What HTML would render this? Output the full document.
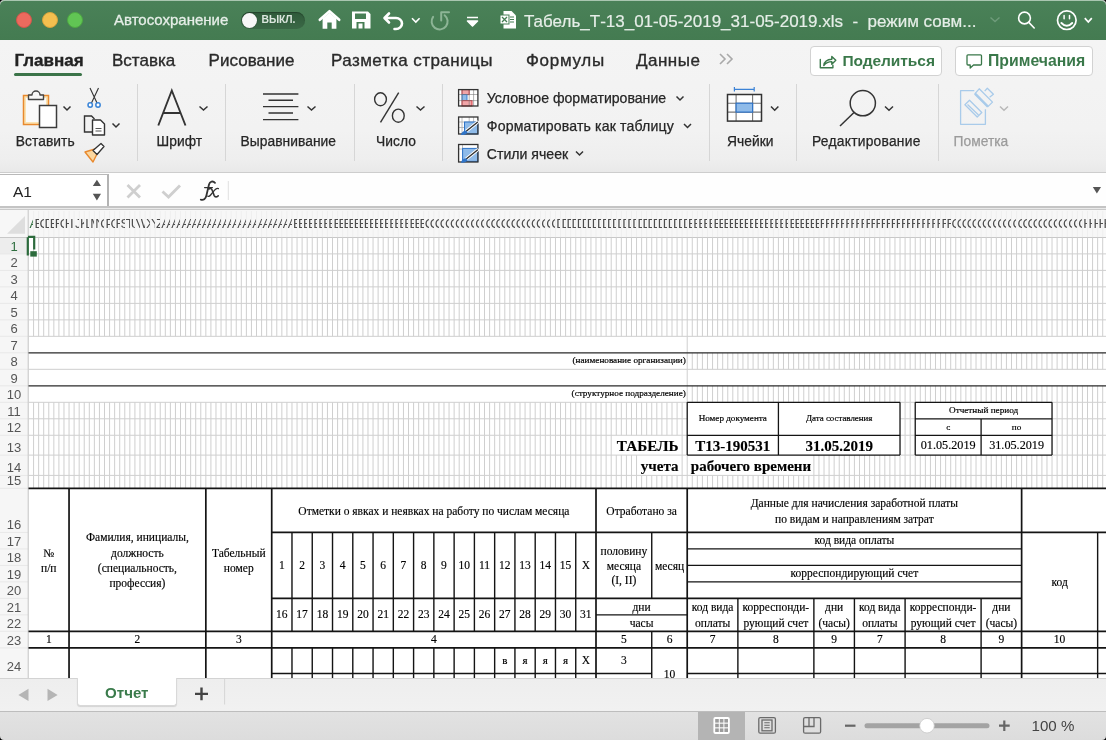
<!DOCTYPE html><html><head><meta charset="utf-8"><style>
*{margin:0;padding:0;box-sizing:border-box}
html,body{width:1106px;height:740px;overflow:hidden;background:#f3f3f3;font-family:"Liberation Sans",sans-serif}
body{will-change:transform}
.a{position:absolute}
.t{position:absolute;white-space:nowrap;color:#000;text-align:center;-webkit-text-stroke:0.15px #000}
.lbl{-webkit-text-stroke:0.25px currentColor}
.tab{-webkit-text-stroke:0.35px currentColor}
.ch{position:absolute;top:211.8px;width:4.1px;overflow:hidden;font-size:13.2px;line-height:24px;white-space:nowrap;font-family:"Liberation Sans",sans-serif}
.rh{position:absolute;left:0;width:28px;text-align:center;font-size:13px;line-height:16px;margin-top:1px}
.tab{position:absolute;top:49px;font-size:17px;color:#2a2a2a;line-height:24px;white-space:nowrap}
.lbl{position:absolute;font-size:13.8px;color:#262626;line-height:16px;white-space:nowrap}
.sep{position:absolute;top:84px;width:1px;height:77px;background:#d6d6d6}
.chev{position:absolute}
</style></head><body>

<div class="a" style="left:0;top:0;width:1106px;height:40px;background:linear-gradient(#4a8158,#447b51);border-radius:5px 5px 0 0;border-top:1px solid #a9c6b0"></div>
<div class="a" style="left:16px;top:12px;width:16px;height:16px;border-radius:50%;background:#ec6a5e;border:1px solid #d2574b"></div>
<div class="a" style="left:41.5px;top:12px;width:16px;height:16px;border-radius:50%;background:#f4bf4f;border:1px solid #d7a33d"></div>
<div class="a" style="left:66.5px;top:12px;width:16px;height:16px;border-radius:50%;background:#61c554;border:1px solid #4ea943"></div>
<div class="a" style="left:114px;top:11.2px;font-size:15px;line-height:18px;color:#e6eee8;-webkit-text-stroke:0.3px #e6eee8;white-space:nowrap">Автосохранение</div>
<div class="a" style="left:241.2px;top:11.5px;width:63.7px;height:17.4px;border-radius:9px;background:linear-gradient(#2f5a3a,#3a6846);box-shadow:inset 0 1px 1px rgba(0,0,0,0.25)"></div>
<div class="a" style="left:241.9px;top:12.5px;width:15.6px;height:15.6px;border-radius:50%;background:#f7f7f7;box-shadow:0 0 1px rgba(0,0,0,0.5)"></div>
<div class="a" style="left:261.6px;top:13.6px;font-size:10.4px;font-weight:bold;line-height:12px;color:#dbe6de;letter-spacing:-0.1px">ВЫКЛ.</div>
<svg class="a" style="left:0;top:0" width="1106" height="40" viewBox="0 0 1106 40">
<g fill="#fff" stroke="none">
<path d="M322.6 18.6 L329.5 12.8 L336.4 18.6 V28.8 H331.7 V22.4 H327.3 V28.8 H322.6 Z"/></g><path d="M319.8 19.8 L329.5 11.2 L339.2 19.8" fill="none" stroke="#fff" stroke-width="2.6" stroke-linecap="round" stroke-linejoin="round"/><g fill="#fff">
<path d="M352 11.5 h16 l2.5 2.5 v14.5 h-18.5 Z M355 13.5 v5.5 h11 v-5.5 Z M356.5 22 v6.5 h8 v-6.5 Z M358.5 23.5 h4 v5 h-4Z" fill-rule="evenodd"/>
</g>
<g fill="none" stroke="#fff" stroke-width="2.6" stroke-linecap="round" stroke-linejoin="round">
<path d="M389 13.5 L384.5 18 L389 22.5 M385 18 H396 a6 5.5 0 0 1 0 11 h-1.5"/>
</g>
<path d="M412 18.2 L415.8 22 L419.6 18.2" fill="none" stroke="#fff" stroke-width="1.6"/>
<g fill="none" stroke="#8db596" stroke-width="2" stroke-linecap="round" stroke-linejoin="round"><path d="M433.1 16.8 A 8 8 0 1 0 444.6 15.2"/><path d="M441.2 20.4 V12.3 H449"/></g>
<path d="M467 17.5 h11 M467.5 21 h10 l-5 5 z" fill="#fff" stroke="#fff" stroke-width="1.6" stroke-linejoin="round"/>
<g>
<path d="M503.5 11 h8 l4.5 4.5 v13 h-12.5z" fill="#fff"/>
<rect x="500" y="15" width="9" height="9" fill="#fff" stroke="#467e54" stroke-width="1"/>
<path d="M502 17 l5 5 M507 17 l-5 5" stroke="#467e54" stroke-width="1.3"/>
<path d="M510 17h4 M510 19.5h4 M510 22h4" stroke="#467e54" stroke-width="1"/>
</g>
<path d="M990.5 17.5 L995 21.5 L999.5 17.5" fill="none" stroke="#6f9c7b" stroke-width="1.4"/>
<g fill="none" stroke="#fff" stroke-width="1.6" stroke-linecap="round">
<circle cx="1024.5" cy="18" r="5.9"/><path d="M1028.8 22.4 L1034.2 28"/>
<circle cx="1066.8" cy="20.2" r="9.3" stroke-width="1.7"/>
<path d="M1061.4 23 Q1066.8 28.6 1072.2 23" stroke-width="1.9"/>
<path d="M1064.1 15.6 V18.8 M1069.5 15.6 V18.8" stroke-width="1.5"/>
<path d="M1084.8 18.2 L1088.3 22 L1091.8 18.2" stroke-width="1.7" stroke-linecap="butt"/>
</g>
</svg>
<div class="a" style="left:524px;top:12px;font-size:17px;line-height:20px;color:#e6eee8;white-space:nowrap;letter-spacing:0px;-webkit-text-stroke:0.2px #e6eee8">Табель_Т-13_01-05-2019_31-05-2019.xls &nbsp;- &nbsp;режим совм...</div>
<div class="a" style="left:0;top:40px;width:1106px;height:132px;background:linear-gradient(#f4f4f4 0px,#f2f2f2 90px,#eeeeee 120px,#e9e9e9 132px)"></div>
<div class="tab" style="left:14.5px;font-weight:bold;color:#222;letter-spacing:0px">Главная</div>
<div class="tab" style="left:112px;letter-spacing:0px">Вставка</div>
<div class="tab" style="left:208.5px;letter-spacing:0.05px">Рисование</div>
<div class="tab" style="left:331px;letter-spacing:0.45px">Разметка страницы</div>
<div class="tab" style="left:526px;letter-spacing:0.7px">Формулы</div>
<div class="tab" style="left:636px;letter-spacing:0.5px">Данные</div>
<div class="a" style="left:14px;top:72.5px;width:68px;height:3.5px;border-radius:2px;background:#3b7449"></div>
<svg class="a" style="left:718px;top:51px" width="20" height="16"><path d="M2 3 L7 8 L2 13 M9 3 L14 8 L9 13" fill="none" stroke="#a9a9a9" stroke-width="1.6"/></svg>
<div class="a" style="left:810px;top:46px;width:132px;height:29.5px;border:1px solid #d2d2d2;border-radius:4px;background:#fff"></div>
<div class="a" style="left:955px;top:46px;width:138px;height:29.5px;border:1px solid #d2d2d2;border-radius:4px;background:#fff"></div>
<div class="a" style="left:842.4px;top:50.8px;font-size:15.5px;line-height:20px;font-weight:bold;color:#3a784a;letter-spacing:-0.05px">Поделиться</div>
<div class="a" style="left:988px;top:50.8px;font-size:15.8px;line-height:20px;font-weight:bold;color:#3a784a">Примечания</div>
<svg class="a" style="left:0;top:0" width="1106" height="175">
<g fill="none" stroke="#3a784a" stroke-width="1.4" stroke-linejoin="round" stroke-linecap="round">
<path d="M820.3 59.5 v8.3 h12.6 v-2.5"/><path d="M823.8 65.5 q0.8 -6 8 -6.3 v-2.8 l4 3.9 -4 3.9 v-2.6 q-5 0 -8 3.9"/>
<path d="M968 54.8 h12.5 a1 1 0 0 1 1 1 v8.2 a1 1 0 0 1 -1 1 h-7 l-3.3 3 v-3 h-2.2 a1 1 0 0 1 -1 -1 v-8.2 a1 1 0 0 1 1 -1 z" stroke="#3a784a" stroke-width="1.3"/>
</g>
</svg>
<div class="sep" style="left:136.8px"></div>
<div class="sep" style="left:224.5px"></div>
<div class="sep" style="left:353.7px"></div>
<div class="sep" style="left:441.5px"></div>
<div class="sep" style="left:708.7px"></div>
<div class="sep" style="left:796.3px"></div>
<div class="sep" style="left:937.5px"></div>
<div class="lbl" style="left:15.8px;top:134px;letter-spacing:0.05px">Вставить</div>
<div class="lbl" style="left:156.6px;top:134px;letter-spacing:0.05px">Шрифт</div>
<div class="lbl" style="left:240.5px;top:134px;letter-spacing:0.05px">Выравнивание</div>
<div class="lbl" style="left:376px;top:134px;letter-spacing:0.05px">Число</div>
<div class="lbl" style="left:727px;top:134px;letter-spacing:0.05px">Ячейки</div>
<div class="lbl" style="left:812px;top:134px;letter-spacing:0.25px">Редактирование</div>
<div class="lbl" style="left:953.6px;top:134px;color:#9b9b9b">Пометка</div>
<div class="lbl" style="left:486.8px;top:90px;font-size:14.1px;letter-spacing:0px">Условное форматирование</div>
<div class="lbl" style="left:486.8px;top:118px;font-size:14.1px;letter-spacing:0.15px">Форматировать как таблицу</div>
<div class="lbl" style="left:486.8px;top:145.5px;font-size:14.1px;letter-spacing:0px">Стили ячеек</div>
<svg class="a" style="left:0;top:0" width="1106" height="175">
<!-- paste -->
<rect x="23.5" y="95.5" width="25" height="29" fill="#fbe3b2" stroke="#e8892e" stroke-width="1.5"/>
<rect x="26" y="98" width="20" height="24" fill="#fafafa"/>
<path d="M28.5 99.5 v-4.5 h3.5 a4 4 0 0 1 8 0 h3.5 v4.5 z" fill="#f7f7f7" stroke="#444" stroke-width="1.4" stroke-linejoin="round"/>
<rect x="39.5" y="105.5" width="17" height="22" fill="#fff" stroke="#3c3c3c" stroke-width="1.5"/>
<!-- scissors -->
<path d="M90 88 L97.5 104 M98.5 88 L91 104" stroke="#333" stroke-width="1.1"/>
<circle cx="90.2" cy="105" r="2.2" fill="#fff" stroke="#3a85d8" stroke-width="1.5"/>
<circle cx="98" cy="105" r="2.2" fill="#fff" stroke="#3a85d8" stroke-width="1.5"/>
<!-- copy -->
<path d="M93.5 132 h-9 v-16 h7 l3 3" fill="none" stroke="#333" stroke-width="1.4"/>
<path d="M92.5 120 h8 l4 4 v11 h-12 z" fill="#fff" stroke="#333" stroke-width="1.4" stroke-linejoin="round"/>
<path d="M95.5 128.5 h6 M95.5 131 h6" stroke="#555" stroke-width="1"/>
<!-- format painter -->
<path d="M85 152 l10 -3 l3 3 l-5 10 z" fill="#fbd7a0" stroke="#e8892e" stroke-width="1.4" stroke-linejoin="round"/>
<path d="M93 150.5 l8 -7 l3 3 l-7 8 z" fill="#fff" stroke="#333" stroke-width="1.3" stroke-linejoin="round"/>
<!-- chevrons -->
<g fill="none" stroke="#333" stroke-width="1.5">
<path d="M63.5 106.5 L67 110 L70.5 106.5"/>
<path d="M112.5 123.5 L116 127 L119.5 123.5"/>
<path d="M199.5 106.5 L203.5 110 L207.5 106.5"/>
<path d="M307.5 106.5 L311.5 110 L315.5 106.5"/>
<path d="M416.5 106.5 L420.5 110 L424.5 106.5"/>
<path d="M676.5 96.5 L680 100 L683.5 96.5"/>
<path d="M684 124 L687.5 127.5 L691 124"/>
<path d="M576 151.5 L579.5 155 L583 151.5"/>
<path d="M771 106.5 L774.7 110.2 L778.4 106.5"/>
<path d="M885 106.5 L889 110.2 L893 106.5"/>
</g>
<path d="M1000 106.5 L1004 110.2 L1008 106.5" fill="none" stroke="#b8b8b8" stroke-width="1.5"/>
<!-- A -->
<path d="M158.3 125.5 L171.8 90.5 L185.5 125.5 M163.2 113 H180.6" fill="none" stroke="#333" stroke-width="1.9"/>
<!-- align -->
<g stroke="#333" stroke-width="1.4">
<path d="M263 94 H298.4 M268.5 100.3 H293 M263 106.6 H298.4 M268.5 113 H293 M263 119.6 H298.4"/>
</g>
<!-- percent -->
<ellipse cx="380.5" cy="99.3" rx="5.9" ry="6.5" fill="none" stroke="#333" stroke-width="1.4"/>
<ellipse cx="398.3" cy="115.7" rx="5.9" ry="6.6" fill="none" stroke="#333" stroke-width="1.4"/>
<path d="M398.7 92.6 L380.5 122.4" stroke="#333" stroke-width="1.4"/>
<!-- cond format icons -->
<rect x="458.6" y="89.6" width="19.3" height="16.4" fill="#fff"/>
<rect x="462" y="89.6" width="7.2" height="5" fill="#f0a5a8" stroke="#d9363e" stroke-width="1"/>
<rect x="462" y="94.6" width="5" height="6" fill="#8fbbe9" stroke="#2f74c8" stroke-width="0.9"/>
<rect x="462" y="100.6" width="10" height="5.4" fill="#f0a5a8" stroke="#d9363e" stroke-width="1"/>
<path d="M458.6 94.5 H478 M458.6 100.6 H478 M462 89.6 V106 M469.2 89.6 V106 M473.6 89.6 V106" stroke="#777" stroke-width="0.8" fill="none" opacity="0.7"/>
<rect x="458.6" y="89.6" width="19.3" height="16.4" fill="none" stroke="#333" stroke-width="1.3"/>
<g>
<rect x="458.6" y="117" width="19.3" height="17" fill="#fff"/>
<path d="M458.6 122 H478 M458.6 127.5 H478 M462 117 V134 M469.2 117 V134 M473.6 117 V134" stroke="#888" stroke-width="0.8" opacity="0.7"/>
<rect x="464.5" y="122" width="13.4" height="12" fill="#8fbbe9" stroke="#2f74c8" stroke-width="1"/>
<rect x="458.6" y="117" width="19.3" height="17" fill="none" stroke="#333" stroke-width="1.3"/>
<path d="M477.5 122.2 L466.5 131" stroke="#fff" stroke-width="3.2" stroke-linecap="round"/>
<path d="M477.5 122.2 L466.5 131" stroke="#333" stroke-width="1.4" stroke-linecap="round"/>
<path d="M461 135 q0.5 -4 5 -4.5 l1.5 1.5 q-1 3.5 -6.5 3z" fill="#2f74c8"/>
</g>
<g>
<rect x="458.6" y="144.5" width="19.3" height="17.5" fill="#fff"/>
<path d="M458.6 149 H478 M462.5 144.5 V162" stroke="#888" stroke-width="0.8" opacity="0.7"/>
<rect x="462.6" y="148.4" width="15.3" height="13" fill="#8fbbe9" stroke="#2f74c8" stroke-width="1"/>
<rect x="458.6" y="144.5" width="19.3" height="17.5" fill="none" stroke="#333" stroke-width="1.3"/>
<path d="M477.5 150 L466.5 158.8" stroke="#fff" stroke-width="3.2" stroke-linecap="round"/>
<path d="M477.5 150 L466.5 158.8" stroke="#333" stroke-width="1.4" stroke-linecap="round"/>
<path d="M461 162.8 q0.5 -4 5 -4.5 l1.5 1.5 q-1 3.5 -6.5 3z" fill="#2f74c8"/>
</g>
<!-- cells -->
<path d="M734.4 89.3 H754.2 M734.4 87 V91.6 M754.2 87 V91.6" stroke="#3b82d6" stroke-width="1.2"/>
<rect x="727.5" y="94.5" width="34" height="26.6" fill="#fff"/>
<path d="M727.5 103.2 H761.5 M727.5 112.1 H761.5 M736.1 94.5 V121.1 M752.6 94.5 V121.1" stroke="#777" stroke-width="1.1"/>
<rect x="736.1" y="103.2" width="16.5" height="8.9" fill="#8fbbe9" stroke="#2f74c8" stroke-width="1.2"/>
<rect x="727.5" y="94.5" width="34" height="26.6" fill="none" stroke="#333" stroke-width="1.5"/>
<!-- search -->
<circle cx="862.8" cy="103.2" r="12.6" fill="none" stroke="#333" stroke-width="1.5"/>
<path d="M854 112.5 L840 126" stroke="#333" stroke-width="1.5"/>
<!-- pometka -->
<g fill="none" stroke="#a9cbea" stroke-width="1.3" stroke-linejoin="round">
<path d="M974.3 90.6 H960.6 V124.3 H985.4 V109.2"/>
<path d="M964.9 104.7 L969.5 100.2 L981.8 112.5 L977.2 117 Z"/>
<path d="M967.5 104.5 L978.5 115"/>
<path d="M975 93.7 L979.2 88.8 L992.5 102.1 L987.9 106.6 Z"/>
<path d="M984.7 91.1 L987.3 88.2 L993.4 94.3 L989.6 97.2"/>
</g>
<path d="M975 93.7 L987.9 106.6" stroke="#a9cbea" stroke-width="2.5"/>
</svg>
<div class="a" style="left:0;top:171.8px;width:1106px;height:1.4px;background:#cdcdcd"></div>
<div class="a" style="left:0;top:173.2px;width:1106px;height:33px;background:#fefefe"></div>
<div class="a" style="left:0;top:173.5px;width:108.5px;height:33px;background:#fff;border-top:1.5px solid #b9b9b9;border-right:2.2px solid #b3b3b3"></div>
<div class="a" style="left:13px;top:182px;font-size:15.5px;line-height:20px;color:#222">A1</div>
<svg class="a" style="left:0;top:170px" width="1106" height="45">
<path d="M92.8 16 L96.9 9.7 L101 16z M92.8 23.8 L96.9 30.5 L101 23.8z" fill="#555"/>
<path d="M127.5 15 L140 27.5 M140 15 L127.5 27.5" stroke="#cfcfcf" stroke-width="2.8"/>
<path d="M162.5 21.5 L168.5 27 L180 15.5" fill="none" stroke="#cfcfcf" stroke-width="2.9"/>
<path d="M1092.8 17 H1101 L1096.9 23.5z" fill="#555"/>
<path d="M228.3 11 V30" stroke="#e0e0e0" stroke-width="1"/>
</svg>
<svg class="a" style="left:0;top:170px" width="240" height="40"><g fill="none" stroke="#333" stroke-linecap="round"><path d="M215 12.8 C213 10.6 209.8 11.2 209 14.5 L206.4 25.5 C205.6 29 203.4 30.4 200.8 29.6" stroke-width="1.8"/><path d="M204.6 17.6 H212.4" stroke-width="1.3"/><path d="M208.8 19 C210.6 17.6 211.8 18.6 212.5 21 L214.2 25.6 C215 27.4 216.6 27.2 218.2 25.8" stroke-width="1.6"/><path d="M218.4 18.6 C217 17.9 215.8 18.8 214.6 20.2 L210.6 25 C209.6 26.4 208.6 26.7 207.8 26.2" stroke-width="1.3"/></g></svg>
<div class="a" style="left:0;top:206.3px;width:1106px;height:1.3px;background:#c4c4c4"></div>
<div class="a" style="left:0;top:207.6px;width:1106px;height:1.8px;background:#e9e9e9"></div>
<div class="a" style="left:0;top:209.2px;width:1106px;height:1.2px;background:#c9c9c9"></div>
<div class="a" style="left:0;top:210.4px;width:1106px;height:27px;background:#f7f7f7"></div>
<svg class="a" style="left:0;top:0" width="1106" height="240"><path d="M33.57 211V237M38.63 211V237M43.7 211V237M48.77 211V237M53.84 211V237M58.9 211V237M63.97 211V237M69.04 211V237M74.1 211V237M79.17 211V237M84.24 211V237M89.3 211V237M94.37 211V237M99.44 211V237M104.5 211V237M109.57 211V237M114.64 211V237M119.71 211V237M124.77 211V237M129.84 211V237M134.91 211V237M139.97 211V237M145.04 211V237M150.11 211V237M155.18 211V237M160.24 211V237M165.31 211V237M170.38 211V237M175.44 211V237M180.51 211V237M185.58 211V237M190.64 211V237M195.71 211V237M200.78 211V237M205.84 211V237M210.91 211V237M215.98 211V237M221.05 211V237M226.11 211V237M231.18 211V237M236.25 211V237M241.31 211V237M246.38 211V237M251.45 211V237M256.51 211V237M261.58 211V237M266.65 211V237M271.72 211V237M276.78 211V237M281.85 211V237M286.92 211V237M291.98 211V237M297.05 211V237M302.12 211V237M307.19 211V237M312.25 211V237M317.32 211V237M322.39 211V237M327.45 211V237M332.52 211V237M337.59 211V237M342.65 211V237M347.72 211V237M352.79 211V237M357.86 211V237M362.92 211V237M367.99 211V237M373.06 211V237M378.12 211V237M383.19 211V237M388.26 211V237M393.32 211V237M398.39 211V237M403.46 211V237M408.53 211V237M413.59 211V237M418.66 211V237M423.73 211V237M428.79 211V237M433.86 211V237M438.93 211V237M443.99 211V237M449.06 211V237M454.13 211V237M459.19 211V237M464.26 211V237M469.33 211V237M474.4 211V237M479.46 211V237M484.53 211V237M489.6 211V237M494.66 211V237M499.73 211V237M504.8 211V237M509.87 211V237M514.93 211V237M520 211V237M525.07 211V237M530.13 211V237M535.2 211V237M540.27 211V237M545.33 211V237M550.4 211V237M555.47 211V237M560.53 211V237M565.6 211V237M570.67 211V237M575.74 211V237M580.8 211V237M585.87 211V237M590.94 211V237M596 211V237M601.07 211V237M606.14 211V237M611.21 211V237M616.27 211V237M621.34 211V237M626.41 211V237M631.47 211V237M636.54 211V237M641.61 211V237M646.67 211V237M651.74 211V237M656.81 211V237M661.88 211V237M666.94 211V237M672.01 211V237M677.08 211V237M682.14 211V237M687.21 211V237M692.28 211V237M697.34 211V237M702.41 211V237M707.48 211V237M712.55 211V237M717.61 211V237M722.68 211V237M727.75 211V237M732.81 211V237M737.88 211V237M742.95 211V237M748.01 211V237M753.08 211V237M758.15 211V237M763.22 211V237M768.28 211V237M773.35 211V237M778.42 211V237M783.48 211V237M788.55 211V237M793.62 211V237M798.68 211V237M803.75 211V237M808.82 211V237M813.88 211V237M818.95 211V237M824.02 211V237M829.09 211V237M834.15 211V237M839.22 211V237M844.29 211V237M849.35 211V237M854.42 211V237M859.49 211V237M864.56 211V237M869.62 211V237M874.69 211V237M879.76 211V237M884.82 211V237M889.89 211V237M894.96 211V237M900.02 211V237M905.09 211V237M910.16 211V237M915.23 211V237M920.29 211V237M925.36 211V237M930.43 211V237M935.49 211V237M940.56 211V237M945.63 211V237M950.69 211V237M955.76 211V237M960.83 211V237M965.89 211V237M970.96 211V237M976.03 211V237M981.1 211V237M986.16 211V237M991.23 211V237M996.3 211V237M1001.36 211V237M1006.43 211V237M1011.5 211V237M1016.57 211V237M1021.63 211V237M1026.7 211V237M1031.77 211V237M1036.83 211V237M1041.9 211V237M1046.97 211V237M1052.03 211V237M1057.1 211V237M1062.17 211V237M1067.24 211V237M1072.3 211V237M1077.37 211V237M1082.44 211V237M1087.5 211V237M1092.57 211V237M1097.64 211V237M1102.7 211V237M1107.77 211V237" stroke="#efefef" stroke-width="1"/>
<path d="M7 233.8 L25 233.8 L25 216Z" fill="#dedede"/></svg>
<div class="ch" style="left:29.4px;color:#2f6e3f">A</div><div class="ch" style="left:34.47px;color:#4d4d4d">B</div><div class="ch" style="left:39.53px;color:#4d4d4d">C</div><div class="ch" style="left:44.6px;color:#4d4d4d">D</div><div class="ch" style="left:49.67px;color:#4d4d4d">E</div><div class="ch" style="left:54.73px;color:#4d4d4d">F</div><div class="ch" style="left:59.8px;color:#4d4d4d">G</div><div class="ch" style="left:64.87px;color:#4d4d4d">H</div><div class="ch" style="left:69.94px;color:#4d4d4d">I</div><div class="ch" style="left:75px;color:#4d4d4d">J</div><div class="ch" style="left:80.07px;color:#4d4d4d">K</div><div class="ch" style="left:85.14px;color:#4d4d4d">L</div><div class="ch" style="left:90.2px;color:#4d4d4d">M</div><div class="ch" style="left:95.27px;color:#4d4d4d">N</div><div class="ch" style="left:100.34px;color:#4d4d4d">O</div><div class="ch" style="left:105.41px;color:#4d4d4d">P</div><div class="ch" style="left:110.47px;color:#4d4d4d">Q</div><div class="ch" style="left:115.54px;color:#4d4d4d">R</div><div class="ch" style="left:120.61px;color:#4d4d4d">S</div><div class="ch" style="left:125.67px;color:#4d4d4d">T</div><div class="ch" style="left:130.74px;color:#4d4d4d">U</div><div class="ch" style="left:135.81px;color:#4d4d4d">V</div><div class="ch" style="left:140.87px;color:#4d4d4d">W</div><div class="ch" style="left:145.94px;color:#4d4d4d">X</div><div class="ch" style="left:151.01px;color:#4d4d4d">Y</div><div class="ch" style="left:156.08px;color:#4d4d4d">Z</div><div class="ch" style="left:161.14px;color:#4d4d4d">AA</div><div class="ch" style="left:166.21px;color:#4d4d4d">AB</div><div class="ch" style="left:171.28px;color:#4d4d4d">AC</div><div class="ch" style="left:176.34px;color:#4d4d4d">AD</div><div class="ch" style="left:181.41px;color:#4d4d4d">AE</div><div class="ch" style="left:186.48px;color:#4d4d4d">AF</div><div class="ch" style="left:191.54px;color:#4d4d4d">AG</div><div class="ch" style="left:196.61px;color:#4d4d4d">AH</div><div class="ch" style="left:201.68px;color:#4d4d4d">AI</div><div class="ch" style="left:206.75px;color:#4d4d4d">AJ</div><div class="ch" style="left:211.81px;color:#4d4d4d">AK</div><div class="ch" style="left:216.88px;color:#4d4d4d">AL</div><div class="ch" style="left:221.95px;color:#4d4d4d">AM</div><div class="ch" style="left:227.01px;color:#4d4d4d">AN</div><div class="ch" style="left:232.08px;color:#4d4d4d">AO</div><div class="ch" style="left:237.15px;color:#4d4d4d">AP</div><div class="ch" style="left:242.21px;color:#4d4d4d">AQ</div><div class="ch" style="left:247.28px;color:#4d4d4d">AR</div><div class="ch" style="left:252.35px;color:#4d4d4d">AS</div><div class="ch" style="left:257.41px;color:#4d4d4d">AT</div><div class="ch" style="left:262.48px;color:#4d4d4d">AU</div><div class="ch" style="left:267.55px;color:#4d4d4d">AV</div><div class="ch" style="left:272.62px;color:#4d4d4d">AW</div><div class="ch" style="left:277.68px;color:#4d4d4d">AX</div><div class="ch" style="left:282.75px;color:#4d4d4d">AY</div><div class="ch" style="left:287.82px;color:#4d4d4d">AZ</div><div class="ch" style="left:292.88px;color:#4d4d4d">BA</div><div class="ch" style="left:297.95px;color:#4d4d4d">BB</div><div class="ch" style="left:303.02px;color:#4d4d4d">BC</div><div class="ch" style="left:308.08px;color:#4d4d4d">BD</div><div class="ch" style="left:313.15px;color:#4d4d4d">BE</div><div class="ch" style="left:318.22px;color:#4d4d4d">BF</div><div class="ch" style="left:323.29px;color:#4d4d4d">BG</div><div class="ch" style="left:328.35px;color:#4d4d4d">BH</div><div class="ch" style="left:333.42px;color:#4d4d4d">BI</div><div class="ch" style="left:338.49px;color:#4d4d4d">BJ</div><div class="ch" style="left:343.55px;color:#4d4d4d">BK</div><div class="ch" style="left:348.62px;color:#4d4d4d">BL</div><div class="ch" style="left:353.69px;color:#4d4d4d">BM</div><div class="ch" style="left:358.75px;color:#4d4d4d">BN</div><div class="ch" style="left:363.82px;color:#4d4d4d">BO</div><div class="ch" style="left:368.89px;color:#4d4d4d">BP</div><div class="ch" style="left:373.96px;color:#4d4d4d">BQ</div><div class="ch" style="left:379.02px;color:#4d4d4d">BR</div><div class="ch" style="left:384.09px;color:#4d4d4d">BS</div><div class="ch" style="left:389.16px;color:#4d4d4d">BT</div><div class="ch" style="left:394.22px;color:#4d4d4d">BU</div><div class="ch" style="left:399.29px;color:#4d4d4d">BV</div><div class="ch" style="left:404.36px;color:#4d4d4d">BW</div><div class="ch" style="left:409.43px;color:#4d4d4d">BX</div><div class="ch" style="left:414.49px;color:#4d4d4d">BY</div><div class="ch" style="left:419.56px;color:#4d4d4d">BZ</div><div class="ch" style="left:424.63px;color:#4d4d4d">CA</div><div class="ch" style="left:429.69px;color:#4d4d4d">CB</div><div class="ch" style="left:434.76px;color:#4d4d4d">CC</div><div class="ch" style="left:439.83px;color:#4d4d4d">CD</div><div class="ch" style="left:444.89px;color:#4d4d4d">CE</div><div class="ch" style="left:449.96px;color:#4d4d4d">CF</div><div class="ch" style="left:455.03px;color:#4d4d4d">CG</div><div class="ch" style="left:460.09px;color:#4d4d4d">CH</div><div class="ch" style="left:465.16px;color:#4d4d4d">CI</div><div class="ch" style="left:470.23px;color:#4d4d4d">CJ</div><div class="ch" style="left:475.3px;color:#4d4d4d">CK</div><div class="ch" style="left:480.36px;color:#4d4d4d">CL</div><div class="ch" style="left:485.43px;color:#4d4d4d">CM</div><div class="ch" style="left:490.5px;color:#4d4d4d">CN</div><div class="ch" style="left:495.56px;color:#4d4d4d">CO</div><div class="ch" style="left:500.63px;color:#4d4d4d">CP</div><div class="ch" style="left:505.7px;color:#4d4d4d">CQ</div><div class="ch" style="left:510.76px;color:#4d4d4d">CR</div><div class="ch" style="left:515.83px;color:#4d4d4d">CS</div><div class="ch" style="left:520.9px;color:#4d4d4d">CT</div><div class="ch" style="left:525.97px;color:#4d4d4d">CU</div><div class="ch" style="left:531.03px;color:#4d4d4d">CV</div><div class="ch" style="left:536.1px;color:#4d4d4d">CW</div><div class="ch" style="left:541.17px;color:#4d4d4d">CX</div><div class="ch" style="left:546.23px;color:#4d4d4d">CY</div><div class="ch" style="left:551.3px;color:#4d4d4d">CZ</div><div class="ch" style="left:556.37px;color:#4d4d4d">DA</div><div class="ch" style="left:561.43px;color:#4d4d4d">DB</div><div class="ch" style="left:566.5px;color:#4d4d4d">DC</div><div class="ch" style="left:571.57px;color:#4d4d4d">DD</div><div class="ch" style="left:576.64px;color:#4d4d4d">DE</div><div class="ch" style="left:581.7px;color:#4d4d4d">DF</div><div class="ch" style="left:586.77px;color:#4d4d4d">DG</div><div class="ch" style="left:591.84px;color:#4d4d4d">DH</div><div class="ch" style="left:596.9px;color:#4d4d4d">DI</div><div class="ch" style="left:601.97px;color:#4d4d4d">DJ</div><div class="ch" style="left:607.04px;color:#4d4d4d">DK</div><div class="ch" style="left:612.11px;color:#4d4d4d">DL</div><div class="ch" style="left:617.17px;color:#4d4d4d">DM</div><div class="ch" style="left:622.24px;color:#4d4d4d">DN</div><div class="ch" style="left:627.31px;color:#4d4d4d">DO</div><div class="ch" style="left:632.37px;color:#4d4d4d">DP</div><div class="ch" style="left:637.44px;color:#4d4d4d">DQ</div><div class="ch" style="left:642.51px;color:#4d4d4d">DR</div><div class="ch" style="left:647.57px;color:#4d4d4d">DS</div><div class="ch" style="left:652.64px;color:#4d4d4d">DT</div><div class="ch" style="left:657.71px;color:#4d4d4d">DU</div><div class="ch" style="left:662.77px;color:#4d4d4d">DV</div><div class="ch" style="left:667.84px;color:#4d4d4d">DW</div><div class="ch" style="left:672.91px;color:#4d4d4d">DX</div><div class="ch" style="left:677.98px;color:#4d4d4d">DY</div><div class="ch" style="left:683.04px;color:#4d4d4d">DZ</div><div class="ch" style="left:688.11px;color:#4d4d4d">EA</div><div class="ch" style="left:693.18px;color:#4d4d4d">EB</div><div class="ch" style="left:698.24px;color:#4d4d4d">EC</div><div class="ch" style="left:703.31px;color:#4d4d4d">ED</div><div class="ch" style="left:708.38px;color:#4d4d4d">EE</div><div class="ch" style="left:713.45px;color:#4d4d4d">EF</div><div class="ch" style="left:718.51px;color:#4d4d4d">EG</div><div class="ch" style="left:723.58px;color:#4d4d4d">EH</div><div class="ch" style="left:728.65px;color:#4d4d4d">EI</div><div class="ch" style="left:733.71px;color:#4d4d4d">EJ</div><div class="ch" style="left:738.78px;color:#4d4d4d">EK</div><div class="ch" style="left:743.85px;color:#4d4d4d">EL</div><div class="ch" style="left:748.91px;color:#4d4d4d">EM</div><div class="ch" style="left:753.98px;color:#4d4d4d">EN</div><div class="ch" style="left:759.05px;color:#4d4d4d">EO</div><div class="ch" style="left:764.12px;color:#4d4d4d">EP</div><div class="ch" style="left:769.18px;color:#4d4d4d">EQ</div><div class="ch" style="left:774.25px;color:#4d4d4d">ER</div><div class="ch" style="left:779.32px;color:#4d4d4d">ES</div><div class="ch" style="left:784.38px;color:#4d4d4d">ET</div><div class="ch" style="left:789.45px;color:#4d4d4d">EU</div><div class="ch" style="left:794.52px;color:#4d4d4d">EV</div><div class="ch" style="left:799.58px;color:#4d4d4d">EW</div><div class="ch" style="left:804.65px;color:#4d4d4d">EX</div><div class="ch" style="left:809.72px;color:#4d4d4d">EY</div><div class="ch" style="left:814.78px;color:#4d4d4d">EZ</div><div class="ch" style="left:819.85px;color:#4d4d4d">FA</div><div class="ch" style="left:824.92px;color:#4d4d4d">FB</div><div class="ch" style="left:829.99px;color:#4d4d4d">FC</div><div class="ch" style="left:835.05px;color:#4d4d4d">FD</div><div class="ch" style="left:840.12px;color:#4d4d4d">FE</div><div class="ch" style="left:845.19px;color:#4d4d4d">FF</div><div class="ch" style="left:850.25px;color:#4d4d4d">FG</div><div class="ch" style="left:855.32px;color:#4d4d4d">FH</div><div class="ch" style="left:860.39px;color:#4d4d4d">FI</div><div class="ch" style="left:865.46px;color:#4d4d4d">FJ</div><div class="ch" style="left:870.52px;color:#4d4d4d">FK</div><div class="ch" style="left:875.59px;color:#4d4d4d">FL</div><div class="ch" style="left:880.66px;color:#4d4d4d">FM</div><div class="ch" style="left:885.72px;color:#4d4d4d">FN</div><div class="ch" style="left:890.79px;color:#4d4d4d">FO</div><div class="ch" style="left:895.86px;color:#4d4d4d">FP</div><div class="ch" style="left:900.92px;color:#4d4d4d">FQ</div><div class="ch" style="left:905.99px;color:#4d4d4d">FR</div><div class="ch" style="left:911.06px;color:#4d4d4d">FS</div><div class="ch" style="left:916.12px;color:#4d4d4d">FT</div><div class="ch" style="left:921.19px;color:#4d4d4d">FU</div><div class="ch" style="left:926.26px;color:#4d4d4d">FV</div><div class="ch" style="left:931.33px;color:#4d4d4d">FW</div><div class="ch" style="left:936.39px;color:#4d4d4d">FX</div><div class="ch" style="left:941.46px;color:#4d4d4d">FY</div><div class="ch" style="left:946.53px;color:#4d4d4d">FZ</div><div class="ch" style="left:951.59px;color:#4d4d4d">GA</div><div class="ch" style="left:956.66px;color:#4d4d4d">GB</div><div class="ch" style="left:961.73px;color:#4d4d4d">GC</div><div class="ch" style="left:966.79px;color:#4d4d4d">GD</div><div class="ch" style="left:971.86px;color:#4d4d4d">GE</div><div class="ch" style="left:976.93px;color:#4d4d4d">GF</div><div class="ch" style="left:982px;color:#4d4d4d">GG</div><div class="ch" style="left:987.06px;color:#4d4d4d">GH</div><div class="ch" style="left:992.13px;color:#4d4d4d">GI</div><div class="ch" style="left:997.2px;color:#4d4d4d">GJ</div><div class="ch" style="left:1002.26px;color:#4d4d4d">GK</div><div class="ch" style="left:1007.33px;color:#4d4d4d">GL</div><div class="ch" style="left:1012.4px;color:#4d4d4d">GM</div><div class="ch" style="left:1017.47px;color:#4d4d4d">GN</div><div class="ch" style="left:1022.53px;color:#4d4d4d">GO</div><div class="ch" style="left:1027.6px;color:#4d4d4d">GP</div><div class="ch" style="left:1032.67px;color:#4d4d4d">GQ</div><div class="ch" style="left:1037.73px;color:#4d4d4d">GR</div><div class="ch" style="left:1042.8px;color:#4d4d4d">GS</div><div class="ch" style="left:1047.87px;color:#4d4d4d">GT</div><div class="ch" style="left:1052.93px;color:#4d4d4d">GU</div><div class="ch" style="left:1058px;color:#4d4d4d">GV</div><div class="ch" style="left:1063.07px;color:#4d4d4d">GW</div><div class="ch" style="left:1068.14px;color:#4d4d4d">GX</div><div class="ch" style="left:1073.2px;color:#4d4d4d">GY</div><div class="ch" style="left:1078.27px;color:#4d4d4d">GZ</div><div class="ch" style="left:1083.34px;color:#4d4d4d">HA</div><div class="ch" style="left:1088.4px;color:#4d4d4d">HB</div><div class="ch" style="left:1093.47px;color:#4d4d4d">HC</div><div class="ch" style="left:1098.54px;color:#4d4d4d">HD</div><div class="ch" style="left:1103.6px;color:#4d4d4d">HE</div>
<div class="a" style="left:0;top:237px;width:1106px;height:1px;background:#c8c8c8"></div>
<div class="a" style="left:28.5px;top:237.5px;width:1078px;height:441px;background:#fff"></div>
<div class="a" style="left:0;top:237.5px;width:28.5px;height:441px;background:#f6f6f6"></div>
<div class="a" style="left:0;top:237.5px;width:28.5px;height:16.5px;background:#ededed"></div>
<svg class="a" style="left:0;top:0" width="1106" height="680">
<path d="M0 253.89H28M0 270.38H28M0 286.87H28M0 303.36H28M0 319.85H28M0 336.34H28M0 352.83H28M0 369.32H28M0 385.81H28M0 402.3H28M0 418.79H28M0 435.28H28M0 455.1H28M0 475.4H28M0 488.3H28M0 532.4H28M0 548.89H28M0 565.38H28M0 581.87H28M0 598.36H28M0 614.85H28M0 631.34H28M0 647.9H28" stroke="#e8e8e8" stroke-width="1"/>
<path d="M28.2 210 V678" stroke="#c6c6c6" stroke-width="1"/>
<path d="M33.57 237.4V336.34M38.63 237.4V336.34M43.7 237.4V336.34M48.77 237.4V336.34M53.84 237.4V336.34M58.9 237.4V336.34M63.97 237.4V336.34M69.04 237.4V336.34M74.1 237.4V336.34M79.17 237.4V336.34M84.24 237.4V336.34M89.3 237.4V336.34M94.37 237.4V336.34M99.44 237.4V336.34M104.5 237.4V336.34M109.57 237.4V336.34M114.64 237.4V336.34M119.71 237.4V336.34M124.77 237.4V336.34M129.84 237.4V336.34M134.91 237.4V336.34M139.97 237.4V336.34M145.04 237.4V336.34M150.11 237.4V336.34M155.18 237.4V336.34M160.24 237.4V336.34M165.31 237.4V336.34M170.38 237.4V336.34M175.44 237.4V336.34M180.51 237.4V336.34M185.58 237.4V336.34M190.64 237.4V336.34M195.71 237.4V336.34M200.78 237.4V336.34M205.84 237.4V336.34M210.91 237.4V336.34M215.98 237.4V336.34M221.05 237.4V336.34M226.11 237.4V336.34M231.18 237.4V336.34M236.25 237.4V336.34M241.31 237.4V336.34M246.38 237.4V336.34M251.45 237.4V336.34M256.51 237.4V336.34M261.58 237.4V336.34M266.65 237.4V336.34M271.72 237.4V336.34M276.78 237.4V336.34M281.85 237.4V336.34M286.92 237.4V336.34M291.98 237.4V336.34M297.05 237.4V336.34M302.12 237.4V336.34M307.19 237.4V336.34M312.25 237.4V336.34M317.32 237.4V336.34M322.39 237.4V336.34M327.45 237.4V336.34M332.52 237.4V336.34M337.59 237.4V336.34M342.65 237.4V336.34M347.72 237.4V336.34M352.79 237.4V336.34M357.86 237.4V336.34M362.92 237.4V336.34M367.99 237.4V336.34M373.06 237.4V336.34M378.12 237.4V336.34M383.19 237.4V336.34M388.26 237.4V336.34M393.32 237.4V336.34M398.39 237.4V336.34M403.46 237.4V336.34M408.53 237.4V336.34M413.59 237.4V336.34M418.66 237.4V336.34M423.73 237.4V336.34M428.79 237.4V336.34M433.86 237.4V336.34M438.93 237.4V336.34M443.99 237.4V336.34M449.06 237.4V336.34M454.13 237.4V336.34M459.19 237.4V336.34M464.26 237.4V336.34M469.33 237.4V336.34M474.4 237.4V336.34M479.46 237.4V336.34M484.53 237.4V336.34M489.6 237.4V336.34M494.66 237.4V336.34M499.73 237.4V336.34M504.8 237.4V336.34M509.87 237.4V336.34M514.93 237.4V336.34M520 237.4V336.34M525.07 237.4V336.34M530.13 237.4V336.34M535.2 237.4V336.34M540.27 237.4V336.34M545.33 237.4V336.34M550.4 237.4V336.34M555.47 237.4V336.34M560.53 237.4V336.34M565.6 237.4V336.34M570.67 237.4V336.34M575.74 237.4V336.34M580.8 237.4V336.34M585.87 237.4V336.34M590.94 237.4V336.34M596 237.4V336.34M601.07 237.4V336.34M606.14 237.4V336.34M611.21 237.4V336.34M616.27 237.4V336.34M621.34 237.4V336.34M626.41 237.4V336.34M631.47 237.4V336.34M636.54 237.4V336.34M641.61 237.4V336.34M646.67 237.4V336.34M651.74 237.4V336.34M656.81 237.4V336.34M661.88 237.4V336.34M666.94 237.4V336.34M672.01 237.4V336.34M677.08 237.4V336.34M682.14 237.4V336.34M687.21 237.4V336.34M692.28 237.4V336.34M697.34 237.4V336.34M702.41 237.4V336.34M707.48 237.4V336.34M712.55 237.4V336.34M717.61 237.4V336.34M722.68 237.4V336.34M727.75 237.4V336.34M732.81 237.4V336.34M737.88 237.4V336.34M742.95 237.4V336.34M748.01 237.4V336.34M753.08 237.4V336.34M758.15 237.4V336.34M763.22 237.4V336.34M768.28 237.4V336.34M773.35 237.4V336.34M778.42 237.4V336.34M783.48 237.4V336.34M788.55 237.4V336.34M793.62 237.4V336.34M798.68 237.4V336.34M803.75 237.4V336.34M808.82 237.4V336.34M813.88 237.4V336.34M818.95 237.4V336.34M824.02 237.4V336.34M829.09 237.4V336.34M834.15 237.4V336.34M839.22 237.4V336.34M844.29 237.4V336.34M849.35 237.4V336.34M854.42 237.4V336.34M859.49 237.4V336.34M864.56 237.4V336.34M869.62 237.4V336.34M874.69 237.4V336.34M879.76 237.4V336.34M884.82 237.4V336.34M889.89 237.4V336.34M894.96 237.4V336.34M900.02 237.4V336.34M905.09 237.4V336.34M910.16 237.4V336.34M915.23 237.4V336.34M920.29 237.4V336.34M925.36 237.4V336.34M930.43 237.4V336.34M935.49 237.4V336.34M940.56 237.4V336.34M945.63 237.4V336.34M950.69 237.4V336.34M955.76 237.4V336.34M960.83 237.4V336.34M965.89 237.4V336.34M970.96 237.4V336.34M976.03 237.4V336.34M981.1 237.4V336.34M986.16 237.4V336.34M991.23 237.4V336.34M996.3 237.4V336.34M1001.36 237.4V336.34M1006.43 237.4V336.34M1011.5 237.4V336.34M1016.57 237.4V336.34M1021.63 237.4V336.34M1026.7 237.4V336.34M1031.77 237.4V336.34M1036.83 237.4V336.34M1041.9 237.4V336.34M1046.97 237.4V336.34M1052.03 237.4V336.34M1057.1 237.4V336.34M1062.17 237.4V336.34M1067.24 237.4V336.34M1072.3 237.4V336.34M1077.37 237.4V336.34M1082.44 237.4V336.34M1087.5 237.4V336.34M1092.57 237.4V336.34M1097.64 237.4V336.34M1102.7 237.4V336.34M1107.77 237.4V336.34M687.21 336.34V402.3M692.28 352.83V369.32M697.34 352.83V369.32M702.41 352.83V369.32M707.48 352.83V369.32M712.55 352.83V369.32M717.61 352.83V369.32M722.68 352.83V369.32M727.75 352.83V369.32M732.81 352.83V369.32M737.88 352.83V369.32M742.95 352.83V369.32M748.01 352.83V369.32M753.08 352.83V369.32M758.15 352.83V369.32M763.22 352.83V369.32M768.28 352.83V369.32M773.35 352.83V369.32M778.42 352.83V369.32M783.48 352.83V369.32M788.55 352.83V369.32M793.62 352.83V369.32M798.68 352.83V369.32M803.75 352.83V369.32M808.82 352.83V369.32M813.88 352.83V369.32M818.95 352.83V369.32M824.02 352.83V369.32M829.09 352.83V369.32M834.15 352.83V369.32M839.22 352.83V369.32M844.29 352.83V369.32M849.35 352.83V369.32M854.42 352.83V369.32M859.49 352.83V369.32M864.56 352.83V369.32M869.62 352.83V369.32M874.69 352.83V369.32M879.76 352.83V369.32M884.82 352.83V369.32M889.89 352.83V369.32M894.96 352.83V369.32M900.02 352.83V369.32M905.09 352.83V369.32M910.16 352.83V369.32M915.23 352.83V369.32M920.29 352.83V369.32M925.36 352.83V369.32M930.43 352.83V369.32M935.49 352.83V369.32M940.56 352.83V369.32M945.63 352.83V369.32M950.69 352.83V369.32M955.76 352.83V369.32M960.83 352.83V369.32M965.89 352.83V369.32M970.96 352.83V369.32M976.03 352.83V369.32M981.1 352.83V369.32M986.16 352.83V369.32M991.23 352.83V369.32M996.3 352.83V369.32M1001.36 352.83V369.32M1006.43 352.83V369.32M1011.5 352.83V369.32M1016.57 352.83V369.32M1021.63 352.83V369.32M1026.7 352.83V369.32M1031.77 352.83V369.32M1036.83 352.83V369.32M1041.9 352.83V369.32M1046.97 352.83V369.32M1052.03 352.83V369.32M1057.1 352.83V369.32M1062.17 352.83V369.32M1067.24 352.83V369.32M1072.3 352.83V369.32M1077.37 352.83V369.32M1082.44 352.83V369.32M1087.5 352.83V369.32M1092.57 352.83V369.32M1097.64 352.83V369.32M1102.7 352.83V369.32M1107.77 352.83V369.32M692.28 385.81V402.3M697.34 385.81V402.3M702.41 385.81V402.3M707.48 385.81V402.3M712.55 385.81V402.3M717.61 385.81V402.3M722.68 385.81V402.3M727.75 385.81V402.3M732.81 385.81V402.3M737.88 385.81V402.3M742.95 385.81V402.3M748.01 385.81V402.3M753.08 385.81V402.3M758.15 385.81V402.3M763.22 385.81V402.3M768.28 385.81V402.3M773.35 385.81V402.3M778.42 385.81V402.3M783.48 385.81V402.3M788.55 385.81V402.3M793.62 385.81V402.3M798.68 385.81V402.3M803.75 385.81V402.3M808.82 385.81V402.3M813.88 385.81V402.3M818.95 385.81V402.3M824.02 385.81V402.3M829.09 385.81V402.3M834.15 385.81V402.3M839.22 385.81V402.3M844.29 385.81V402.3M849.35 385.81V402.3M854.42 385.81V402.3M859.49 385.81V402.3M864.56 385.81V402.3M869.62 385.81V402.3M874.69 385.81V402.3M879.76 385.81V402.3M884.82 385.81V402.3M889.89 385.81V402.3M894.96 385.81V402.3M900.02 385.81V402.3M905.09 385.81V402.3M910.16 385.81V402.3M915.23 385.81V402.3M920.29 385.81V402.3M925.36 385.81V402.3M930.43 385.81V402.3M935.49 385.81V402.3M940.56 385.81V402.3M945.63 385.81V402.3M950.69 385.81V402.3M955.76 385.81V402.3M960.83 385.81V402.3M965.89 385.81V402.3M970.96 385.81V402.3M976.03 385.81V402.3M981.1 385.81V402.3M986.16 385.81V402.3M991.23 385.81V402.3M996.3 385.81V402.3M1001.36 385.81V402.3M1006.43 385.81V402.3M1011.5 385.81V402.3M1016.57 385.81V402.3M1021.63 385.81V402.3M1026.7 385.81V402.3M1031.77 385.81V402.3M1036.83 385.81V402.3M1041.9 385.81V402.3M1046.97 385.81V402.3M1052.03 385.81V402.3M1057.1 385.81V402.3M1062.17 385.81V402.3M1067.24 385.81V402.3M1072.3 385.81V402.3M1077.37 385.81V402.3M1082.44 385.81V402.3M1087.5 385.81V402.3M1092.57 385.81V402.3M1097.64 385.81V402.3M1102.7 385.81V402.3M1107.77 385.81V402.3M33.57 402.3V418.79M38.63 402.3V418.79M43.7 402.3V418.79M48.77 402.3V418.79M53.84 402.3V418.79M58.9 402.3V418.79M63.97 402.3V418.79M69.04 402.3V418.79M74.1 402.3V418.79M79.17 402.3V418.79M84.24 402.3V418.79M89.3 402.3V418.79M94.37 402.3V418.79M99.44 402.3V418.79M104.5 402.3V418.79M109.57 402.3V418.79M114.64 402.3V418.79M119.71 402.3V418.79M124.77 402.3V418.79M129.84 402.3V418.79M134.91 402.3V418.79M139.97 402.3V418.79M145.04 402.3V418.79M150.11 402.3V418.79M155.18 402.3V418.79M160.24 402.3V418.79M165.31 402.3V418.79M170.38 402.3V418.79M175.44 402.3V418.79M180.51 402.3V418.79M185.58 402.3V418.79M190.64 402.3V418.79M195.71 402.3V418.79M200.78 402.3V418.79M205.84 402.3V418.79M210.91 402.3V418.79M215.98 402.3V418.79M221.05 402.3V418.79M226.11 402.3V418.79M231.18 402.3V418.79M236.25 402.3V418.79M241.31 402.3V418.79M246.38 402.3V418.79M251.45 402.3V418.79M256.51 402.3V418.79M261.58 402.3V418.79M266.65 402.3V418.79M271.72 402.3V418.79M276.78 402.3V418.79M281.85 402.3V418.79M286.92 402.3V418.79M291.98 402.3V418.79M297.05 402.3V418.79M302.12 402.3V418.79M307.19 402.3V418.79M312.25 402.3V418.79M317.32 402.3V418.79M322.39 402.3V418.79M327.45 402.3V418.79M332.52 402.3V418.79M337.59 402.3V418.79M342.65 402.3V418.79M347.72 402.3V418.79M352.79 402.3V418.79M357.86 402.3V418.79M362.92 402.3V418.79M367.99 402.3V418.79M373.06 402.3V418.79M378.12 402.3V418.79M383.19 402.3V418.79M388.26 402.3V418.79M393.32 402.3V418.79M398.39 402.3V418.79M403.46 402.3V418.79M408.53 402.3V418.79M413.59 402.3V418.79M418.66 402.3V418.79M423.73 402.3V418.79M428.79 402.3V418.79M433.86 402.3V418.79M438.93 402.3V418.79M443.99 402.3V418.79M449.06 402.3V418.79M454.13 402.3V418.79M459.19 402.3V418.79M464.26 402.3V418.79M469.33 402.3V418.79M474.4 402.3V418.79M479.46 402.3V418.79M484.53 402.3V418.79M489.6 402.3V418.79M494.66 402.3V418.79M499.73 402.3V418.79M504.8 402.3V418.79M509.87 402.3V418.79M514.93 402.3V418.79M520 402.3V418.79M525.07 402.3V418.79M530.13 402.3V418.79M535.2 402.3V418.79M540.27 402.3V418.79M545.33 402.3V418.79M550.4 402.3V418.79M555.47 402.3V418.79M560.53 402.3V418.79M565.6 402.3V418.79M570.67 402.3V418.79M575.74 402.3V418.79M580.8 402.3V418.79M585.87 402.3V418.79M590.94 402.3V418.79M596 402.3V418.79M601.07 402.3V418.79M606.14 402.3V418.79M611.21 402.3V418.79M616.27 402.3V418.79M621.34 402.3V418.79M626.41 402.3V418.79M631.47 402.3V418.79M636.54 402.3V418.79M641.61 402.3V418.79M646.67 402.3V418.79M651.74 402.3V418.79M656.81 402.3V418.79M661.88 402.3V418.79M666.94 402.3V418.79M672.01 402.3V418.79M677.08 402.3V418.79M682.14 402.3V418.79M905.09 402.3V418.79M910.16 402.3V418.79M1057.1 402.3V418.79M1062.17 402.3V418.79M1067.24 402.3V418.79M1072.3 402.3V418.79M1077.37 402.3V418.79M1082.44 402.3V418.79M1087.5 402.3V418.79M1092.57 402.3V418.79M1097.64 402.3V418.79M1102.7 402.3V418.79M1107.77 402.3V418.79M33.57 418.79V435.28M38.63 418.79V435.28M43.7 418.79V435.28M48.77 418.79V435.28M53.84 418.79V435.28M58.9 418.79V435.28M63.97 418.79V435.28M69.04 418.79V435.28M74.1 418.79V435.28M79.17 418.79V435.28M84.24 418.79V435.28M89.3 418.79V435.28M94.37 418.79V435.28M99.44 418.79V435.28M104.5 418.79V435.28M109.57 418.79V435.28M114.64 418.79V435.28M119.71 418.79V435.28M124.77 418.79V435.28M129.84 418.79V435.28M134.91 418.79V435.28M139.97 418.79V435.28M145.04 418.79V435.28M150.11 418.79V435.28M155.18 418.79V435.28M160.24 418.79V435.28M165.31 418.79V435.28M170.38 418.79V435.28M175.44 418.79V435.28M180.51 418.79V435.28M185.58 418.79V435.28M190.64 418.79V435.28M195.71 418.79V435.28M200.78 418.79V435.28M205.84 418.79V435.28M210.91 418.79V435.28M215.98 418.79V435.28M221.05 418.79V435.28M226.11 418.79V435.28M231.18 418.79V435.28M236.25 418.79V435.28M241.31 418.79V435.28M246.38 418.79V435.28M251.45 418.79V435.28M256.51 418.79V435.28M261.58 418.79V435.28M266.65 418.79V435.28M271.72 418.79V435.28M276.78 418.79V435.28M281.85 418.79V435.28M286.92 418.79V435.28M291.98 418.79V435.28M297.05 418.79V435.28M302.12 418.79V435.28M307.19 418.79V435.28M312.25 418.79V435.28M317.32 418.79V435.28M322.39 418.79V435.28M327.45 418.79V435.28M332.52 418.79V435.28M337.59 418.79V435.28M342.65 418.79V435.28M347.72 418.79V435.28M352.79 418.79V435.28M357.86 418.79V435.28M362.92 418.79V435.28M367.99 418.79V435.28M373.06 418.79V435.28M378.12 418.79V435.28M383.19 418.79V435.28M388.26 418.79V435.28M393.32 418.79V435.28M398.39 418.79V435.28M403.46 418.79V435.28M408.53 418.79V435.28M413.59 418.79V435.28M418.66 418.79V435.28M423.73 418.79V435.28M428.79 418.79V435.28M433.86 418.79V435.28M438.93 418.79V435.28M443.99 418.79V435.28M449.06 418.79V435.28M454.13 418.79V435.28M459.19 418.79V435.28M464.26 418.79V435.28M469.33 418.79V435.28M474.4 418.79V435.28M479.46 418.79V435.28M484.53 418.79V435.28M489.6 418.79V435.28M494.66 418.79V435.28M499.73 418.79V435.28M504.8 418.79V435.28M509.87 418.79V435.28M514.93 418.79V435.28M520 418.79V435.28M525.07 418.79V435.28M530.13 418.79V435.28M535.2 418.79V435.28M540.27 418.79V435.28M545.33 418.79V435.28M550.4 418.79V435.28M555.47 418.79V435.28M560.53 418.79V435.28M565.6 418.79V435.28M570.67 418.79V435.28M575.74 418.79V435.28M580.8 418.79V435.28M585.87 418.79V435.28M590.94 418.79V435.28M596 418.79V435.28M601.07 418.79V435.28M606.14 418.79V435.28M611.21 418.79V435.28M616.27 418.79V435.28M621.34 418.79V435.28M626.41 418.79V435.28M631.47 418.79V435.28M636.54 418.79V435.28M641.61 418.79V435.28M646.67 418.79V435.28M651.74 418.79V435.28M656.81 418.79V435.28M661.88 418.79V435.28M666.94 418.79V435.28M672.01 418.79V435.28M677.08 418.79V435.28M682.14 418.79V435.28M905.09 418.79V435.28M910.16 418.79V435.28M1057.1 418.79V435.28M1062.17 418.79V435.28M1067.24 418.79V435.28M1072.3 418.79V435.28M1077.37 418.79V435.28M1082.44 418.79V435.28M1087.5 418.79V435.28M1092.57 418.79V435.28M1097.64 418.79V435.28M1102.7 418.79V435.28M1107.77 418.79V435.28M33.57 435.28V455.1M38.63 435.28V455.1M43.7 435.28V455.1M48.77 435.28V455.1M53.84 435.28V455.1M58.9 435.28V455.1M63.97 435.28V455.1M69.04 435.28V455.1M74.1 435.28V455.1M79.17 435.28V455.1M84.24 435.28V455.1M89.3 435.28V455.1M94.37 435.28V455.1M99.44 435.28V455.1M104.5 435.28V455.1M109.57 435.28V455.1M114.64 435.28V455.1M119.71 435.28V455.1M124.77 435.28V455.1M129.84 435.28V455.1M134.91 435.28V455.1M139.97 435.28V455.1M145.04 435.28V455.1M150.11 435.28V455.1M155.18 435.28V455.1M160.24 435.28V455.1M165.31 435.28V455.1M170.38 435.28V455.1M175.44 435.28V455.1M180.51 435.28V455.1M185.58 435.28V455.1M190.64 435.28V455.1M195.71 435.28V455.1M200.78 435.28V455.1M205.84 435.28V455.1M210.91 435.28V455.1M215.98 435.28V455.1M221.05 435.28V455.1M226.11 435.28V455.1M231.18 435.28V455.1M236.25 435.28V455.1M241.31 435.28V455.1M246.38 435.28V455.1M251.45 435.28V455.1M256.51 435.28V455.1M261.58 435.28V455.1M266.65 435.28V455.1M271.72 435.28V455.1M276.78 435.28V455.1M281.85 435.28V455.1M286.92 435.28V455.1M291.98 435.28V455.1M297.05 435.28V455.1M302.12 435.28V455.1M307.19 435.28V455.1M312.25 435.28V455.1M317.32 435.28V455.1M322.39 435.28V455.1M327.45 435.28V455.1M332.52 435.28V455.1M337.59 435.28V455.1M342.65 435.28V455.1M347.72 435.28V455.1M352.79 435.28V455.1M357.86 435.28V455.1M362.92 435.28V455.1M367.99 435.28V455.1M373.06 435.28V455.1M378.12 435.28V455.1M383.19 435.28V455.1M388.26 435.28V455.1M393.32 435.28V455.1M398.39 435.28V455.1M403.46 435.28V455.1M408.53 435.28V455.1M413.59 435.28V455.1M418.66 435.28V455.1M423.73 435.28V455.1M428.79 435.28V455.1M433.86 435.28V455.1M438.93 435.28V455.1M443.99 435.28V455.1M449.06 435.28V455.1M454.13 435.28V455.1M459.19 435.28V455.1M464.26 435.28V455.1M469.33 435.28V455.1M474.4 435.28V455.1M479.46 435.28V455.1M484.53 435.28V455.1M489.6 435.28V455.1M494.66 435.28V455.1M499.73 435.28V455.1M504.8 435.28V455.1M509.87 435.28V455.1M514.93 435.28V455.1M520 435.28V455.1M525.07 435.28V455.1M530.13 435.28V455.1M535.2 435.28V455.1M540.27 435.28V455.1M545.33 435.28V455.1M550.4 435.28V455.1M555.47 435.28V455.1M560.53 435.28V455.1M565.6 435.28V455.1M570.67 435.28V455.1M575.74 435.28V455.1M580.8 435.28V455.1M585.87 435.28V455.1M590.94 435.28V455.1M596 435.28V455.1M601.07 435.28V455.1M606.14 435.28V455.1M611.21 435.28V455.1M682.14 435.28V455.1M905.09 435.28V455.1M910.16 435.28V455.1M1057.1 435.28V455.1M1062.17 435.28V455.1M1067.24 435.28V455.1M1072.3 435.28V455.1M1077.37 435.28V455.1M1082.44 435.28V455.1M1087.5 435.28V455.1M1092.57 435.28V455.1M1097.64 435.28V455.1M1102.7 435.28V455.1M1107.77 435.28V455.1M33.57 455.1V475.4M38.63 455.1V475.4M43.7 455.1V475.4M48.77 455.1V475.4M53.84 455.1V475.4M58.9 455.1V475.4M63.97 455.1V475.4M69.04 455.1V475.4M74.1 455.1V475.4M79.17 455.1V475.4M84.24 455.1V475.4M89.3 455.1V475.4M94.37 455.1V475.4M99.44 455.1V475.4M104.5 455.1V475.4M109.57 455.1V475.4M114.64 455.1V475.4M119.71 455.1V475.4M124.77 455.1V475.4M129.84 455.1V475.4M134.91 455.1V475.4M139.97 455.1V475.4M145.04 455.1V475.4M150.11 455.1V475.4M155.18 455.1V475.4M160.24 455.1V475.4M165.31 455.1V475.4M170.38 455.1V475.4M175.44 455.1V475.4M180.51 455.1V475.4M185.58 455.1V475.4M190.64 455.1V475.4M195.71 455.1V475.4M200.78 455.1V475.4M205.84 455.1V475.4M210.91 455.1V475.4M215.98 455.1V475.4M221.05 455.1V475.4M226.11 455.1V475.4M231.18 455.1V475.4M236.25 455.1V475.4M241.31 455.1V475.4M246.38 455.1V475.4M251.45 455.1V475.4M256.51 455.1V475.4M261.58 455.1V475.4M266.65 455.1V475.4M271.72 455.1V475.4M276.78 455.1V475.4M281.85 455.1V475.4M286.92 455.1V475.4M291.98 455.1V475.4M297.05 455.1V475.4M302.12 455.1V475.4M307.19 455.1V475.4M312.25 455.1V475.4M317.32 455.1V475.4M322.39 455.1V475.4M327.45 455.1V475.4M332.52 455.1V475.4M337.59 455.1V475.4M342.65 455.1V475.4M347.72 455.1V475.4M352.79 455.1V475.4M357.86 455.1V475.4M362.92 455.1V475.4M367.99 455.1V475.4M373.06 455.1V475.4M378.12 455.1V475.4M383.19 455.1V475.4M388.26 455.1V475.4M393.32 455.1V475.4M398.39 455.1V475.4M403.46 455.1V475.4M408.53 455.1V475.4M413.59 455.1V475.4M418.66 455.1V475.4M423.73 455.1V475.4M428.79 455.1V475.4M433.86 455.1V475.4M438.93 455.1V475.4M443.99 455.1V475.4M449.06 455.1V475.4M454.13 455.1V475.4M459.19 455.1V475.4M464.26 455.1V475.4M469.33 455.1V475.4M474.4 455.1V475.4M479.46 455.1V475.4M484.53 455.1V475.4M489.6 455.1V475.4M494.66 455.1V475.4M499.73 455.1V475.4M504.8 455.1V475.4M509.87 455.1V475.4M514.93 455.1V475.4M520 455.1V475.4M525.07 455.1V475.4M530.13 455.1V475.4M535.2 455.1V475.4M540.27 455.1V475.4M545.33 455.1V475.4M550.4 455.1V475.4M555.47 455.1V475.4M560.53 455.1V475.4M565.6 455.1V475.4M570.67 455.1V475.4M575.74 455.1V475.4M580.8 455.1V475.4M585.87 455.1V475.4M590.94 455.1V475.4M596 455.1V475.4M601.07 455.1V475.4M606.14 455.1V475.4M611.21 455.1V475.4M616.27 455.1V475.4M621.34 455.1V475.4M626.41 455.1V475.4M631.47 455.1V475.4M636.54 455.1V475.4M682.14 455.1V475.4M687.21 455.1V475.4M813.88 455.1V475.4M818.95 455.1V475.4M824.02 455.1V475.4M829.09 455.1V475.4M834.15 455.1V475.4M839.22 455.1V475.4M844.29 455.1V475.4M849.35 455.1V475.4M854.42 455.1V475.4M859.49 455.1V475.4M864.56 455.1V475.4M869.62 455.1V475.4M874.69 455.1V475.4M879.76 455.1V475.4M884.82 455.1V475.4M889.89 455.1V475.4M894.96 455.1V475.4M900.02 455.1V475.4M905.09 455.1V475.4M910.16 455.1V475.4M915.23 455.1V475.4M920.29 455.1V475.4M925.36 455.1V475.4M930.43 455.1V475.4M935.49 455.1V475.4M940.56 455.1V475.4M945.63 455.1V475.4M950.69 455.1V475.4M955.76 455.1V475.4M960.83 455.1V475.4M965.89 455.1V475.4M970.96 455.1V475.4M976.03 455.1V475.4M981.1 455.1V475.4M986.16 455.1V475.4M991.23 455.1V475.4M996.3 455.1V475.4M1001.36 455.1V475.4M1006.43 455.1V475.4M1011.5 455.1V475.4M1016.57 455.1V475.4M1021.63 455.1V475.4M1026.7 455.1V475.4M1031.77 455.1V475.4M1036.83 455.1V475.4M1041.9 455.1V475.4M1046.97 455.1V475.4M1052.03 455.1V475.4M1057.1 455.1V475.4M1062.17 455.1V475.4M1067.24 455.1V475.4M1072.3 455.1V475.4M1077.37 455.1V475.4M1082.44 455.1V475.4M1087.5 455.1V475.4M1092.57 455.1V475.4M1097.64 455.1V475.4M1102.7 455.1V475.4M1107.77 455.1V475.4M33.57 475.4V488.3M38.63 475.4V488.3M43.7 475.4V488.3M48.77 475.4V488.3M53.84 475.4V488.3M58.9 475.4V488.3M63.97 475.4V488.3M69.04 475.4V488.3M74.1 475.4V488.3M79.17 475.4V488.3M84.24 475.4V488.3M89.3 475.4V488.3M94.37 475.4V488.3M99.44 475.4V488.3M104.5 475.4V488.3M109.57 475.4V488.3M114.64 475.4V488.3M119.71 475.4V488.3M124.77 475.4V488.3M129.84 475.4V488.3M134.91 475.4V488.3M139.97 475.4V488.3M145.04 475.4V488.3M150.11 475.4V488.3M155.18 475.4V488.3M160.24 475.4V488.3M165.31 475.4V488.3M170.38 475.4V488.3M175.44 475.4V488.3M180.51 475.4V488.3M185.58 475.4V488.3M190.64 475.4V488.3M195.71 475.4V488.3M200.78 475.4V488.3M205.84 475.4V488.3M210.91 475.4V488.3M215.98 475.4V488.3M221.05 475.4V488.3M226.11 475.4V488.3M231.18 475.4V488.3M236.25 475.4V488.3M241.31 475.4V488.3M246.38 475.4V488.3M251.45 475.4V488.3M256.51 475.4V488.3M261.58 475.4V488.3M266.65 475.4V488.3M271.72 475.4V488.3M276.78 475.4V488.3M281.85 475.4V488.3M286.92 475.4V488.3M291.98 475.4V488.3M297.05 475.4V488.3M302.12 475.4V488.3M307.19 475.4V488.3M312.25 475.4V488.3M317.32 475.4V488.3M322.39 475.4V488.3M327.45 475.4V488.3M332.52 475.4V488.3M337.59 475.4V488.3M342.65 475.4V488.3M347.72 475.4V488.3M352.79 475.4V488.3M357.86 475.4V488.3M362.92 475.4V488.3M367.99 475.4V488.3M373.06 475.4V488.3M378.12 475.4V488.3M383.19 475.4V488.3M388.26 475.4V488.3M393.32 475.4V488.3M398.39 475.4V488.3M403.46 475.4V488.3M408.53 475.4V488.3M413.59 475.4V488.3M418.66 475.4V488.3M423.73 475.4V488.3M428.79 475.4V488.3M433.86 475.4V488.3M438.93 475.4V488.3M443.99 475.4V488.3M449.06 475.4V488.3M454.13 475.4V488.3M459.19 475.4V488.3M464.26 475.4V488.3M469.33 475.4V488.3M474.4 475.4V488.3M479.46 475.4V488.3M484.53 475.4V488.3M489.6 475.4V488.3M494.66 475.4V488.3M499.73 475.4V488.3M504.8 475.4V488.3M509.87 475.4V488.3M514.93 475.4V488.3M520 475.4V488.3M525.07 475.4V488.3M530.13 475.4V488.3M535.2 475.4V488.3M540.27 475.4V488.3M545.33 475.4V488.3M550.4 475.4V488.3M555.47 475.4V488.3M560.53 475.4V488.3M565.6 475.4V488.3M570.67 475.4V488.3M575.74 475.4V488.3M580.8 475.4V488.3M585.87 475.4V488.3M590.94 475.4V488.3M596 475.4V488.3M601.07 475.4V488.3M606.14 475.4V488.3M611.21 475.4V488.3M616.27 475.4V488.3M621.34 475.4V488.3M626.41 475.4V488.3M631.47 475.4V488.3M636.54 475.4V488.3M641.61 475.4V488.3M646.67 475.4V488.3M651.74 475.4V488.3M656.81 475.4V488.3M661.88 475.4V488.3M666.94 475.4V488.3M672.01 475.4V488.3M677.08 475.4V488.3M682.14 475.4V488.3M687.21 475.4V488.3M692.28 475.4V488.3M697.34 475.4V488.3M702.41 475.4V488.3M707.48 475.4V488.3M712.55 475.4V488.3M717.61 475.4V488.3M722.68 475.4V488.3M727.75 475.4V488.3M732.81 475.4V488.3M737.88 475.4V488.3M742.95 475.4V488.3M748.01 475.4V488.3M753.08 475.4V488.3M758.15 475.4V488.3M763.22 475.4V488.3M768.28 475.4V488.3M773.35 475.4V488.3M778.42 475.4V488.3M783.48 475.4V488.3M788.55 475.4V488.3M793.62 475.4V488.3M798.68 475.4V488.3M803.75 475.4V488.3M808.82 475.4V488.3M813.88 475.4V488.3M818.95 475.4V488.3M824.02 475.4V488.3M829.09 475.4V488.3M834.15 475.4V488.3M839.22 475.4V488.3M844.29 475.4V488.3M849.35 475.4V488.3M854.42 475.4V488.3M859.49 475.4V488.3M864.56 475.4V488.3M869.62 475.4V488.3M874.69 475.4V488.3M879.76 475.4V488.3M884.82 475.4V488.3M889.89 475.4V488.3M894.96 475.4V488.3M900.02 475.4V488.3M905.09 475.4V488.3M910.16 475.4V488.3M915.23 475.4V488.3M920.29 475.4V488.3M925.36 475.4V488.3M930.43 475.4V488.3M935.49 475.4V488.3M940.56 475.4V488.3M945.63 475.4V488.3M950.69 475.4V488.3M955.76 475.4V488.3M960.83 475.4V488.3M965.89 475.4V488.3M970.96 475.4V488.3M976.03 475.4V488.3M981.1 475.4V488.3M986.16 475.4V488.3M991.23 475.4V488.3M996.3 475.4V488.3M1001.36 475.4V488.3M1006.43 475.4V488.3M1011.5 475.4V488.3M1016.57 475.4V488.3M1021.63 475.4V488.3M1026.7 475.4V488.3M1031.77 475.4V488.3M1036.83 475.4V488.3M1041.9 475.4V488.3M1046.97 475.4V488.3M1052.03 475.4V488.3M1057.1 475.4V488.3M1062.17 475.4V488.3M1067.24 475.4V488.3M1072.3 475.4V488.3M1077.37 475.4V488.3M1082.44 475.4V488.3M1087.5 475.4V488.3M1092.57 475.4V488.3M1097.64 475.4V488.3M1102.7 475.4V488.3M1107.77 475.4V488.3M28.5 253.89H1106M28.5 270.38H1106M28.5 286.87H1106M28.5 303.36H1106M28.5 319.85H1106M28.5 336.34H1106M28.5 369.32H1106M28.5 402.3H1106M28.5 418.79H687.21M1052.03 418.79H1106M900.02 418.79H915.23M28.5 435.28H687.21M1052.03 435.28H1106M900.02 435.28H915.23M28.5 455.1H687.21M1052.03 455.1H1106M900.02 455.1H915.23M28.5 475.4H1106" stroke="#cfcfcf" stroke-width="1" fill="none"/>
<path d="M28.5 352.83H1106M28.5 385.81H1106" stroke="#2b2b2b" stroke-width="1.25" fill="none"/>
<path d="M687.21 402.3H778.42M687.21 435.28H778.42M687.21 455.1H778.42M687.21 402.3V455.1M778.42 402.3V455.1M778.42 402.3H900.02M778.42 435.28H900.02M778.42 455.1H900.02M778.42 402.3V455.1M900.02 402.3V455.1M915.23 402.3H1052.03M915.23 418.79H1052.03M915.23 435.28H1052.03M915.23 455.1H1052.03M915.23 402.3V455.1M1052.03 402.3V455.1M981.1 418.79V455.1" stroke="#141414" stroke-width="1.3" fill="none"/>
<path d="M28.5 488.3H1106M69.04 488.3V678M205.84 488.3V678M271.72 488.3V678M596 488.3V678M687.21 488.3V678M1021.63 488.3V678M271.72 532.4H1106M271.72 598.36H1021.63M28.5 631.34H1106M28.5 647.9H1106" stroke="#141414" stroke-width="1.7" fill="none"/>
<path d="M687.21 548.89H1021.63M687.21 565.38H1021.63M687.21 581.87H1021.63M596 614.85H687.21M271.72 673.5H651.74M687.21 673.5H1106M291.98 532.4V631.34M291.98 647.9V678M312.25 532.4V631.34M312.25 647.9V678M332.52 532.4V631.34M332.52 647.9V678M352.79 532.4V631.34M352.79 647.9V678M373.06 532.4V631.34M373.06 647.9V678M393.32 532.4V631.34M393.32 647.9V678M413.59 532.4V631.34M413.59 647.9V678M433.86 532.4V631.34M433.86 647.9V678M454.13 532.4V631.34M454.13 647.9V678M474.4 532.4V631.34M474.4 647.9V678M494.66 532.4V631.34M494.66 647.9V678M514.93 532.4V631.34M514.93 647.9V678M535.2 532.4V631.34M535.2 647.9V678M555.47 532.4V631.34M555.47 647.9V678M575.74 532.4V631.34M575.74 647.9V678M651.74 532.4V598.36M651.74 631.34V678M737.88 598.36V678M813.88 598.36V678M854.42 598.36V678M905.09 598.36V678M981.1 598.36V678M1097.64 532.4V678" stroke="#141414" stroke-width="1.4" fill="none"/>
<path d="M27.8 255.5 V237.2 M28 236.8 H34.2 V249.4" stroke="#2c6b3c" stroke-width="2.2" fill="none"/>
<rect x="30.3" y="251.2" width="6.5" height="5.4" fill="#2c6b3c"/>
</svg>
<div class="rh" style="top:237.89px;color:#2f6e3f">1</div><div class="rh" style="top:254.38px;color:#555">2</div><div class="rh" style="top:270.87px;color:#555">3</div><div class="rh" style="top:287.36px;color:#555">4</div><div class="rh" style="top:303.85px;color:#555">5</div><div class="rh" style="top:320.34px;color:#555">6</div><div class="rh" style="top:336.83px;color:#555">7</div><div class="rh" style="top:353.32px;color:#555">8</div><div class="rh" style="top:369.81px;color:#555">9</div><div class="rh" style="top:386.3px;color:#555">10</div><div class="rh" style="top:402.79px;color:#555">11</div><div class="rh" style="top:419.28px;color:#555">12</div><div class="rh" style="top:439.1px;color:#555">13</div><div class="rh" style="top:459.4px;color:#555">14</div><div class="rh" style="top:472.3px;color:#555">15</div><div class="rh" style="top:516.4px;color:#555">16</div><div class="rh" style="top:532.89px;color:#555">17</div><div class="rh" style="top:549.38px;color:#555">18</div><div class="rh" style="top:565.87px;color:#555">19</div><div class="rh" style="top:582.36px;color:#555">20</div><div class="rh" style="top:598.85px;color:#555">21</div><div class="rh" style="top:615.34px;color:#555">22</div><div class="rh" style="top:631.9px;color:#555">23</div><div class="rh" style="top:657.5px;color:#555">24</div>
<div class="t" style="left:285.8px;top:354.78px;width:400px;text-align:right;line-height:11.04px;font-size:9.2px;font-family:'Liberation Serif', serif;-webkit-text-stroke:0.2px #000;">(наименование организации)</div><div class="t" style="left:285.8px;top:387.98px;width:400px;text-align:right;line-height:11.04px;font-size:9.2px;font-family:'Liberation Serif', serif;-webkit-text-stroke:0.2px #000;">(структурное подразделение)</div><div class="t" style="left:582.8px;top:413.14px;width:300px;line-height:10.92px;font-size:9.1px;font-family:'Liberation Serif', serif;-webkit-text-stroke:0.2px #000;">Номер документа</div><div class="t" style="left:689.2px;top:413.26px;width:300px;line-height:10.68px;font-size:8.9px;font-family:'Liberation Serif', serif;-webkit-text-stroke:0.2px #000;">Дата составления</div><div class="t" style="left:833.6px;top:405.28px;width:300px;line-height:11.04px;font-size:9.2px;font-family:'Liberation Serif', serif;-webkit-text-stroke:0.2px #000;">Отчетный период</div><div class="t" style="left:798.2px;top:421.58px;width:300px;line-height:11.04px;font-size:9.2px;font-family:'Liberation Serif', serif;-webkit-text-stroke:0.2px #000;">с</div><div class="t" style="left:866.6px;top:421.58px;width:300px;line-height:11.04px;font-size:9.2px;font-family:'Liberation Serif', serif;-webkit-text-stroke:0.2px #000;">по</div><div class="t" style="left:278.5px;top:436.68px;width:400px;text-align:right;line-height:18.24px;font-size:15.2px;font-family:'Liberation Serif', serif;font-weight:bold;">ТАБЕЛЬ</div><div class="t" style="left:582.8px;top:436.6px;width:300px;line-height:18px;font-size:15px;font-family:'Liberation Serif', serif;font-weight:bold;">Т13-190531</div><div class="t" style="left:689.2px;top:436.6px;width:300px;line-height:18px;font-size:15px;font-family:'Liberation Serif', serif;font-weight:bold;">31.05.2019</div><div class="t" style="left:798.2px;top:438.08px;width:300px;line-height:14.64px;font-size:12.2px;font-family:'Liberation Serif', serif;-webkit-text-stroke:0.15px #000;">01.05.2019</div><div class="t" style="left:866.6px;top:438.08px;width:300px;line-height:14.64px;font-size:12.2px;font-family:'Liberation Serif', serif;-webkit-text-stroke:0.15px #000;">31.05.2019</div><div class="t" style="left:278.5px;top:456.6px;width:400px;text-align:right;line-height:18px;font-size:15px;font-family:'Liberation Serif', serif;font-weight:bold;">учета</div><div class="t" style="left:690.8px;top:456.6px;text-align:left;line-height:18px;font-size:15px;font-family:'Liberation Serif', serif;font-weight:bold;">рабочего времени</div><div class="t" style="left:-101.25px;top:546.6px;width:300px;line-height:13.8px;font-size:11.5px;font-family:'Liberation Serif', serif;">№</div><div class="t" style="left:-101.25px;top:561.9px;width:300px;line-height:13.8px;font-size:11.5px;font-family:'Liberation Serif', serif;">п/п</div><div class="t" style="left:-12.6px;top:531.3px;width:300px;line-height:13.8px;font-size:11.5px;font-family:'Liberation Serif', serif;">Фамилия, инициалы,</div><div class="t" style="left:-12.6px;top:546.6px;width:300px;line-height:13.8px;font-size:11.5px;font-family:'Liberation Serif', serif;">должность</div><div class="t" style="left:-12.6px;top:561.9px;width:300px;line-height:13.8px;font-size:11.5px;font-family:'Liberation Serif', serif;">(специальность,</div><div class="t" style="left:-12.6px;top:577px;width:300px;line-height:13.8px;font-size:11.5px;font-family:'Liberation Serif', serif;">профессия)</div><div class="t" style="left:88.75px;top:546.6px;width:300px;line-height:13.8px;font-size:11.5px;font-family:'Liberation Serif', serif;">Табельный</div><div class="t" style="left:88.75px;top:561.9px;width:300px;line-height:13.8px;font-size:11.5px;font-family:'Liberation Serif', serif;">номер</div><div class="t" style="left:283.9px;top:504.5px;width:300px;line-height:13.8px;font-size:11.5px;font-family:'Liberation Serif', serif;">Отметки о явках и неявках на работу по числам месяца</div><div class="t" style="left:131.85px;top:558.9px;width:300px;line-height:13.8px;font-size:11.5px;font-family:'Liberation Serif', serif;">1</div><div class="t" style="left:131.85px;top:608.1px;width:300px;line-height:13.8px;font-size:11.5px;font-family:'Liberation Serif', serif;">16</div><div class="t" style="left:152.12px;top:558.9px;width:300px;line-height:13.8px;font-size:11.5px;font-family:'Liberation Serif', serif;">2</div><div class="t" style="left:152.12px;top:608.1px;width:300px;line-height:13.8px;font-size:11.5px;font-family:'Liberation Serif', serif;">17</div><div class="t" style="left:172.39px;top:558.9px;width:300px;line-height:13.8px;font-size:11.5px;font-family:'Liberation Serif', serif;">3</div><div class="t" style="left:172.39px;top:608.1px;width:300px;line-height:13.8px;font-size:11.5px;font-family:'Liberation Serif', serif;">18</div><div class="t" style="left:192.65px;top:558.9px;width:300px;line-height:13.8px;font-size:11.5px;font-family:'Liberation Serif', serif;">4</div><div class="t" style="left:192.65px;top:608.1px;width:300px;line-height:13.8px;font-size:11.5px;font-family:'Liberation Serif', serif;">19</div><div class="t" style="left:212.92px;top:558.9px;width:300px;line-height:13.8px;font-size:11.5px;font-family:'Liberation Serif', serif;">5</div><div class="t" style="left:212.92px;top:608.1px;width:300px;line-height:13.8px;font-size:11.5px;font-family:'Liberation Serif', serif;">20</div><div class="t" style="left:233.19px;top:558.9px;width:300px;line-height:13.8px;font-size:11.5px;font-family:'Liberation Serif', serif;">6</div><div class="t" style="left:233.19px;top:608.1px;width:300px;line-height:13.8px;font-size:11.5px;font-family:'Liberation Serif', serif;">21</div><div class="t" style="left:253.46px;top:558.9px;width:300px;line-height:13.8px;font-size:11.5px;font-family:'Liberation Serif', serif;">7</div><div class="t" style="left:253.46px;top:608.1px;width:300px;line-height:13.8px;font-size:11.5px;font-family:'Liberation Serif', serif;">22</div><div class="t" style="left:273.73px;top:558.9px;width:300px;line-height:13.8px;font-size:11.5px;font-family:'Liberation Serif', serif;">8</div><div class="t" style="left:273.73px;top:608.1px;width:300px;line-height:13.8px;font-size:11.5px;font-family:'Liberation Serif', serif;">23</div><div class="t" style="left:293.99px;top:558.9px;width:300px;line-height:13.8px;font-size:11.5px;font-family:'Liberation Serif', serif;">9</div><div class="t" style="left:293.99px;top:608.1px;width:300px;line-height:13.8px;font-size:11.5px;font-family:'Liberation Serif', serif;">24</div><div class="t" style="left:314.26px;top:558.9px;width:300px;line-height:13.8px;font-size:11.5px;font-family:'Liberation Serif', serif;">10</div><div class="t" style="left:314.26px;top:608.1px;width:300px;line-height:13.8px;font-size:11.5px;font-family:'Liberation Serif', serif;">25</div><div class="t" style="left:334.53px;top:558.9px;width:300px;line-height:13.8px;font-size:11.5px;font-family:'Liberation Serif', serif;">11</div><div class="t" style="left:334.53px;top:608.1px;width:300px;line-height:13.8px;font-size:11.5px;font-family:'Liberation Serif', serif;">26</div><div class="t" style="left:354.8px;top:558.9px;width:300px;line-height:13.8px;font-size:11.5px;font-family:'Liberation Serif', serif;">12</div><div class="t" style="left:354.8px;top:608.1px;width:300px;line-height:13.8px;font-size:11.5px;font-family:'Liberation Serif', serif;">27</div><div class="t" style="left:375.07px;top:558.9px;width:300px;line-height:13.8px;font-size:11.5px;font-family:'Liberation Serif', serif;">13</div><div class="t" style="left:375.07px;top:608.1px;width:300px;line-height:13.8px;font-size:11.5px;font-family:'Liberation Serif', serif;">28</div><div class="t" style="left:395.33px;top:558.9px;width:300px;line-height:13.8px;font-size:11.5px;font-family:'Liberation Serif', serif;">14</div><div class="t" style="left:395.33px;top:608.1px;width:300px;line-height:13.8px;font-size:11.5px;font-family:'Liberation Serif', serif;">29</div><div class="t" style="left:415.6px;top:558.9px;width:300px;line-height:13.8px;font-size:11.5px;font-family:'Liberation Serif', serif;">15</div><div class="t" style="left:415.6px;top:608.1px;width:300px;line-height:13.8px;font-size:11.5px;font-family:'Liberation Serif', serif;">30</div><div class="t" style="left:435.87px;top:558.9px;width:300px;line-height:13.8px;font-size:11.5px;font-family:'Liberation Serif', serif;">X</div><div class="t" style="left:435.87px;top:608.1px;width:300px;line-height:13.8px;font-size:11.5px;font-family:'Liberation Serif', serif;">31</div><div class="t" style="left:491.6px;top:504.7px;width:300px;line-height:13.8px;font-size:11.5px;font-family:'Liberation Serif', serif;">Отработано за</div><div class="t" style="left:473.9px;top:544.7px;width:300px;line-height:13.8px;font-size:11.5px;font-family:'Liberation Serif', serif;">половину</div><div class="t" style="left:473.9px;top:559.5px;width:300px;line-height:13.8px;font-size:11.5px;font-family:'Liberation Serif', serif;">месяца</div><div class="t" style="left:473.9px;top:574.3px;width:300px;line-height:13.8px;font-size:11.5px;font-family:'Liberation Serif', serif;">(I, II)</div><div class="t" style="left:519.5px;top:559.5px;width:300px;line-height:13.8px;font-size:11.5px;font-family:'Liberation Serif', serif;">месяц</div><div class="t" style="left:491.6px;top:601.1px;width:300px;line-height:13.8px;font-size:11.5px;font-family:'Liberation Serif', serif;">дни</div><div class="t" style="left:491.6px;top:617.1px;width:300px;line-height:13.8px;font-size:11.5px;font-family:'Liberation Serif', serif;">часы</div><div class="t" style="left:704.4px;top:497.2px;width:300px;line-height:13.8px;font-size:11.5px;font-family:'Liberation Serif', serif;">Данные для начисления заработной платы</div><div class="t" style="left:704.4px;top:512.5px;width:300px;line-height:13.8px;font-size:11.5px;font-family:'Liberation Serif', serif;">по видам и направлениям затрат</div><div class="t" style="left:704.4px;top:534px;width:300px;line-height:13.8px;font-size:11.5px;font-family:'Liberation Serif', serif;">код вида оплаты</div><div class="t" style="left:704.4px;top:567px;width:300px;line-height:13.8px;font-size:11.5px;font-family:'Liberation Serif', serif;">корреспондирующий счет</div><div class="t" style="left:562.6px;top:601.1px;width:300px;line-height:13.8px;font-size:11.5px;font-family:'Liberation Serif', serif;">код вида</div><div class="t" style="left:562.6px;top:617.1px;width:300px;line-height:13.8px;font-size:11.5px;font-family:'Liberation Serif', serif;">оплаты</div><div class="t" style="left:625.9px;top:601.1px;width:300px;line-height:13.8px;font-size:11.5px;font-family:'Liberation Serif', serif;">корреспонди-</div><div class="t" style="left:625.9px;top:617.1px;width:300px;line-height:13.8px;font-size:11.5px;font-family:'Liberation Serif', serif;">рующий счет</div><div class="t" style="left:684.2px;top:601.1px;width:300px;line-height:13.8px;font-size:11.5px;font-family:'Liberation Serif', serif;">дни</div><div class="t" style="left:684.2px;top:617.1px;width:300px;line-height:13.8px;font-size:11.5px;font-family:'Liberation Serif', serif;">(часы)</div><div class="t" style="left:729.8px;top:601.1px;width:300px;line-height:13.8px;font-size:11.5px;font-family:'Liberation Serif', serif;">код вида</div><div class="t" style="left:729.8px;top:617.1px;width:300px;line-height:13.8px;font-size:11.5px;font-family:'Liberation Serif', serif;">оплаты</div><div class="t" style="left:793.1px;top:601.1px;width:300px;line-height:13.8px;font-size:11.5px;font-family:'Liberation Serif', serif;">корреспонди-</div><div class="t" style="left:793.1px;top:617.1px;width:300px;line-height:13.8px;font-size:11.5px;font-family:'Liberation Serif', serif;">рующий счет</div><div class="t" style="left:851.4px;top:601.1px;width:300px;line-height:13.8px;font-size:11.5px;font-family:'Liberation Serif', serif;">дни</div><div class="t" style="left:851.4px;top:617.1px;width:300px;line-height:13.8px;font-size:11.5px;font-family:'Liberation Serif', serif;">(часы)</div><div class="t" style="left:909.6px;top:575.5px;width:300px;line-height:13.8px;font-size:11.5px;font-family:'Liberation Serif', serif;">код</div><div class="t" style="left:-101.25px;top:633.4px;width:300px;line-height:13.8px;font-size:11.5px;font-family:'Liberation Serif', serif;">1</div><div class="t" style="left:-12.6px;top:633.4px;width:300px;line-height:13.8px;font-size:11.5px;font-family:'Liberation Serif', serif;">2</div><div class="t" style="left:88.75px;top:633.4px;width:300px;line-height:13.8px;font-size:11.5px;font-family:'Liberation Serif', serif;">3</div><div class="t" style="left:283.9px;top:633.4px;width:300px;line-height:13.8px;font-size:11.5px;font-family:'Liberation Serif', serif;">4</div><div class="t" style="left:473.9px;top:633.4px;width:300px;line-height:13.8px;font-size:11.5px;font-family:'Liberation Serif', serif;">5</div><div class="t" style="left:519.5px;top:633.4px;width:300px;line-height:13.8px;font-size:11.5px;font-family:'Liberation Serif', serif;">6</div><div class="t" style="left:562.6px;top:633.4px;width:300px;line-height:13.8px;font-size:11.5px;font-family:'Liberation Serif', serif;">7</div><div class="t" style="left:625.9px;top:633.4px;width:300px;line-height:13.8px;font-size:11.5px;font-family:'Liberation Serif', serif;">8</div><div class="t" style="left:684.2px;top:633.4px;width:300px;line-height:13.8px;font-size:11.5px;font-family:'Liberation Serif', serif;">9</div><div class="t" style="left:729.8px;top:633.4px;width:300px;line-height:13.8px;font-size:11.5px;font-family:'Liberation Serif', serif;">7</div><div class="t" style="left:793.1px;top:633.4px;width:300px;line-height:13.8px;font-size:11.5px;font-family:'Liberation Serif', serif;">8</div><div class="t" style="left:851.4px;top:633.4px;width:300px;line-height:13.8px;font-size:11.5px;font-family:'Liberation Serif', serif;">9</div><div class="t" style="left:909.6px;top:633.4px;width:300px;line-height:13.8px;font-size:11.5px;font-family:'Liberation Serif', serif;">10</div><div class="t" style="left:354.8px;top:654px;width:300px;line-height:13.2px;font-size:11px;font-family:'Liberation Serif', serif;">в</div><div class="t" style="left:375.07px;top:654px;width:300px;line-height:13.2px;font-size:11px;font-family:'Liberation Serif', serif;">я</div><div class="t" style="left:395.33px;top:654px;width:300px;line-height:13.2px;font-size:11px;font-family:'Liberation Serif', serif;">я</div><div class="t" style="left:415.6px;top:654px;width:300px;line-height:13.2px;font-size:11px;font-family:'Liberation Serif', serif;">я</div><div class="t" style="left:435.87px;top:653.7px;width:300px;line-height:13.8px;font-size:11.5px;font-family:'Liberation Serif', serif;">X</div><div class="t" style="left:473.9px;top:653.7px;width:300px;line-height:13.8px;font-size:11.5px;font-family:'Liberation Serif', serif;">3</div><div class="t" style="left:519.5px;top:667.7px;width:300px;line-height:13.8px;font-size:11.5px;font-family:'Liberation Serif', serif;">10</div>
<div class="a" style="left:0;top:678px;width:1106px;height:33px;background:linear-gradient(#eeeeee,#f1f1f1);border-top:1px solid #d3d3d3"></div>
<div class="a" style="left:77px;top:678px;width:99.6px;height:28px;background:#fff;border:1px solid #d9d9d9;border-top:none;border-radius:0 0 3.5px 3.5px;box-shadow:0 1px 1px rgba(0,0,0,0.12)"></div>
<div class="a" style="left:105px;top:684px;font-size:15.1px;line-height:18px;font-weight:bold;color:#3a7b4b">Отчет</div>
<svg class="a" style="left:0;top:676px" width="300" height="36">
<path d="M28.5 12.8 L18.4 18.9 L28.5 25z" fill="#b5b5b5"/>
<path d="M47.5 12.8 L57.6 18.9 L47.5 25z" fill="#b5b5b5"/>
<path d="M201.5 11.5 V24.2 M195 17.9 H208" stroke="#444" stroke-width="2.4"/>
<path d="M224.6 3 V28.5" stroke="#d5d5d5" stroke-width="1"/>
</svg>
<div class="a" style="left:0;top:710.6px;width:1106px;height:30px;background:linear-gradient(#e2e2e2,#dcdcdc);border-top:1px solid #bdbdbd"></div>
<div class="a" style="left:698.2px;top:711.5px;width:46.8px;height:29px;background:#b4b4b4"></div>
<svg class="a" style="left:0;top:700px" width="1106" height="40">
<rect x="713.4" y="17" width="16.4" height="17" rx="2" fill="#fff"/>
<g fill="#9c9c9c">
<rect x="715.2" y="19" width="3.6" height="3.6"/><rect x="719.8" y="19" width="3.6" height="3.6"/><rect x="724.4" y="19" width="3.6" height="3.6"/>
<rect x="715.2" y="23.7" width="3.6" height="3.6"/><rect x="719.8" y="23.7" width="3.6" height="3.6"/><rect x="724.4" y="23.7" width="3.6" height="3.6"/>
<rect x="715.2" y="28.4" width="3.6" height="3.6"/><rect x="719.8" y="28.4" width="3.6" height="3.6"/><rect x="724.4" y="28.4" width="3.6" height="3.6"/>
</g>
<g fill="none" stroke="#6a6a6a" stroke-width="1.3">
<rect x="758.8" y="17.6" width="16.6" height="15.6" rx="1.5"/>
<rect x="762" y="20" width="10" height="10.8"/>
<path d="M764.3 22.7 H769.7 M764.3 25.2 H769.7 M764.3 27.7 H769.7" stroke-width="1.1"/>
<rect x="803.6" y="17.6" width="17" height="15.6" rx="1.5"/>
<path d="M804 26.5 H814 V17.6 M809 17.6 V26.5"/>
</g>
<path d="M845 25.7 H855.5" stroke="#666" stroke-width="2.2"/>
<path d="M867 25.7 H987" stroke="#a3a3a3" stroke-width="5" stroke-linecap="round"/>
<circle cx="927" cy="25.7" r="7.3" fill="#fff" stroke="#c9c9c9" stroke-width="0.8"/>
<path d="M999 25.7 H1009.7 M1004.3 20.5 V31" stroke="#666" stroke-width="2.2"/>
</svg>
<div class="a" style="left:1031.5px;top:717px;font-size:15.1px;line-height:18px;color:#444">100 %</div>
<svg class="a" style="left:0;top:0" width="1106" height="740"><path d="M0 0 H4 A4 4 0 0 0 0 4Z M1106 0 H1102 A4 4 0 0 1 1106 4Z M0 740 H4 A4 4 0 0 1 0 736Z M1106 740 H1102 A4 4 0 0 0 1106 736Z" fill="#000"/></svg>
</body></html>
